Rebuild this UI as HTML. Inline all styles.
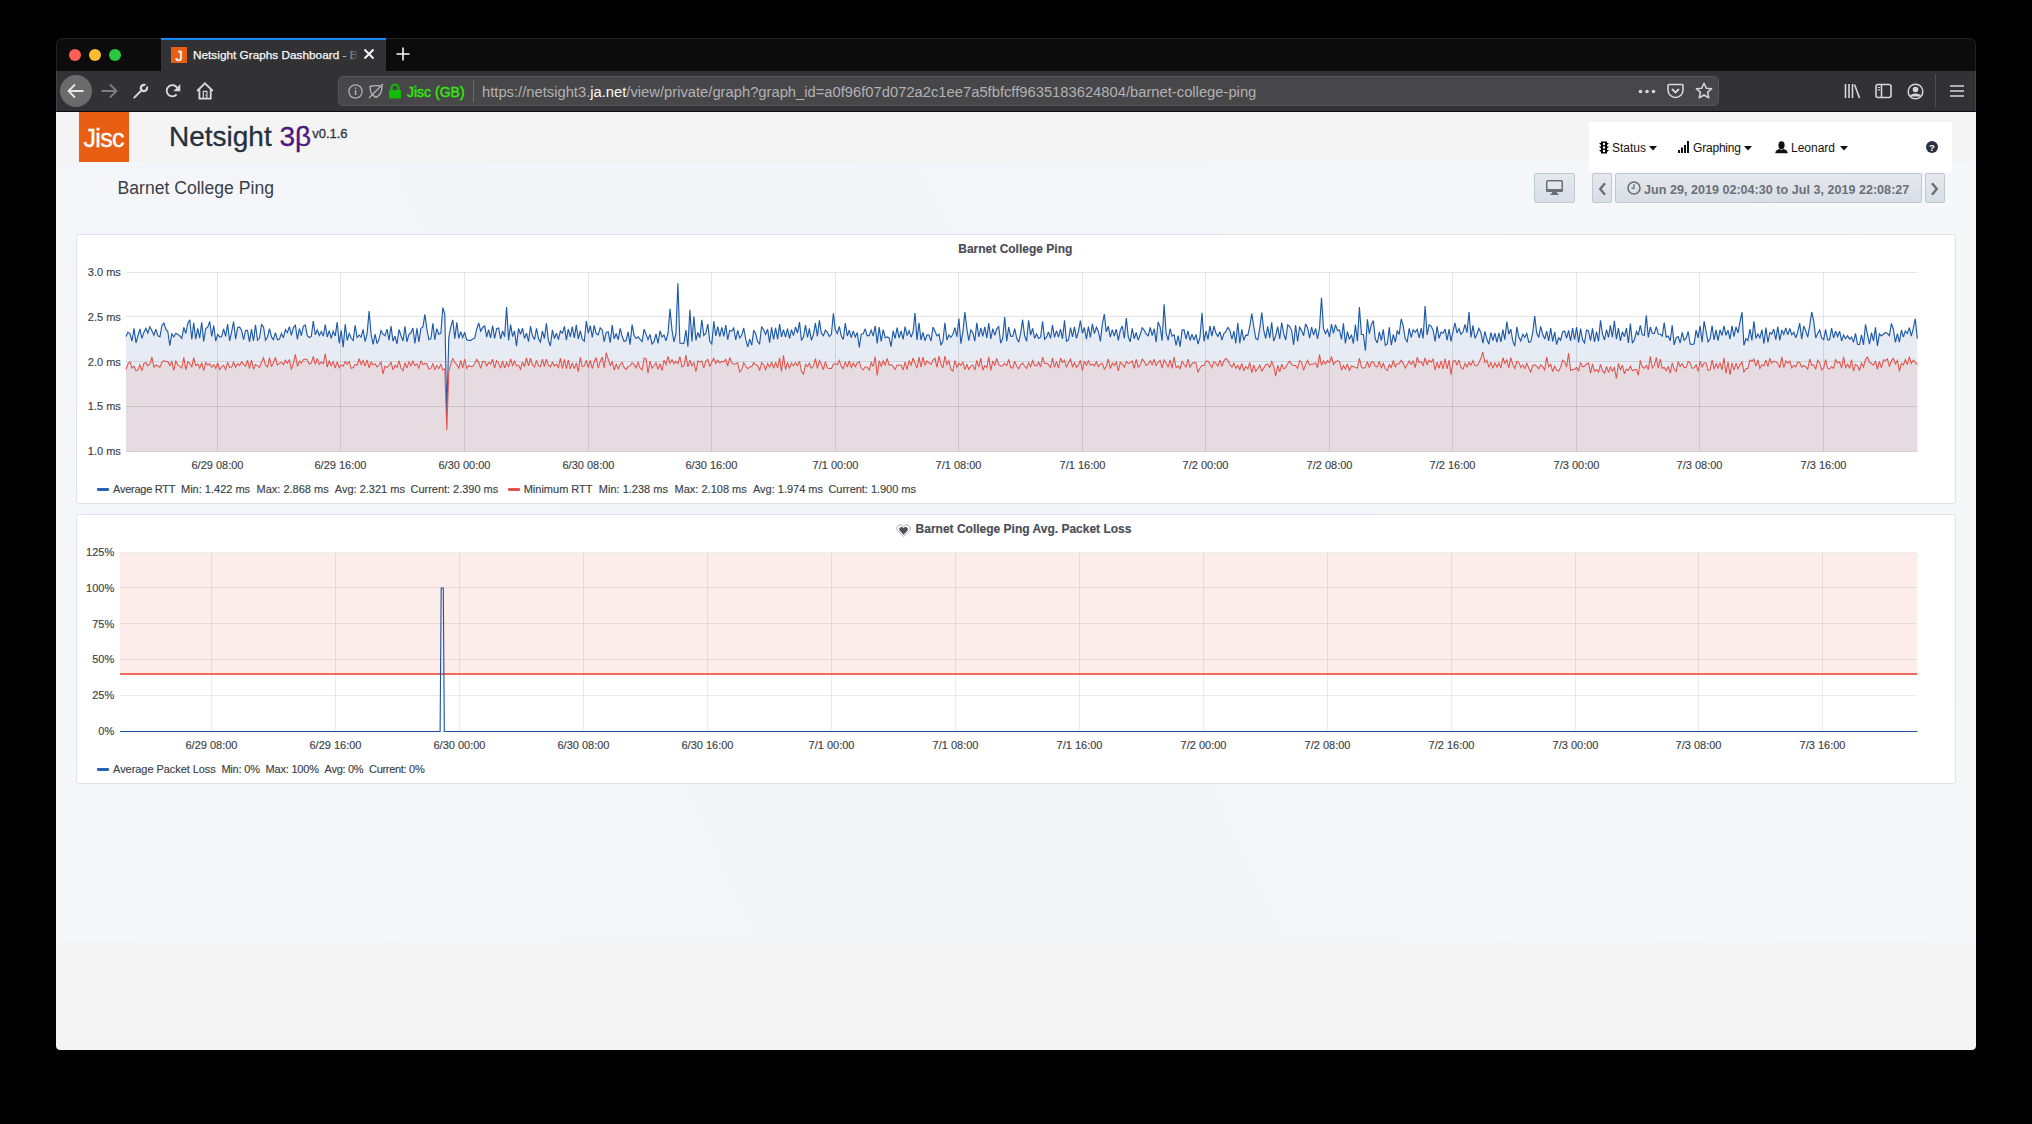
<!DOCTYPE html>
<html><head><meta charset="utf-8">
<style>
*{box-sizing:border-box;margin:0;padding:0}
html,body{width:2032px;height:1124px;background:#000;overflow:hidden;font-family:"Liberation Sans",sans-serif}
.abs{position:absolute}
#win{position:absolute;left:56px;top:38px;width:1920px;height:1012px;border-radius:6px 6px 4px 4px;overflow:hidden;background:transparent}
#winborder{position:absolute;left:56px;top:38px;width:1920px;height:1012px;border-radius:6px 6px 4px 4px;border:1px solid rgba(255,255,255,0.09);pointer-events:none}
#tabbar{position:absolute;left:0;top:0;width:1920px;height:33px;background:#0c0c0d}
#toolbar{position:absolute;left:0;top:33px;width:1920px;height:41px;background:#323234;border-bottom:1px solid #0c0c0d}
.dot{position:absolute;width:12px;height:12px;border-radius:50%}
.txt{position:absolute;white-space:pre;line-height:1}
#page{position:absolute;left:0;top:74px;width:1920px;height:938px;background:#f4f4f4;border-radius:0 0 4px 4px;overflow:hidden}
#grad{position:absolute;left:0;top:50px;width:1920px;height:781px;background:linear-gradient(65deg,#f5f6f9 0%,#f4f5f8 45%,#f6f7f8 100%)}
.panel{position:absolute;left:20px;width:1880px;height:270px;background:#fff;border:1px solid #dde3ec;border-radius:3px}
.btn{position:absolute;top:61px;height:30px;border:1px solid #c2c8d0;border-radius:2px;background:linear-gradient(#e5e9ee,#d8dee6)}
.ax{position:absolute;white-space:pre;line-height:1;font-size:11px;color:#3a3a3a;-webkit-text-stroke:0.15px currentColor}
</style></head>
<body>
<div id="win">
  <div id="tabbar" style="border-radius:6px 6px 0 0">
    <div class="dot" style="left:13px;top:11px;background:#fe5f57"></div>
    <div class="dot" style="left:33px;top:11px;background:#febc2e"></div>
    <div class="dot" style="left:53px;top:11px;background:#28c840"></div>
    <div class="abs" style="left:105px;top:0;width:225px;height:33px;background:#323234;border-top:2px solid #0a84ff"></div>
    <div class="abs" style="left:115px;top:9px;width:16px;height:16px;background:#e85e13"></div>
    <div class="txt" style="left:119.5px;top:10.5px;font-size:14.5px;color:#fff;-webkit-text-stroke:0.3px #fff">J</div>
    <div class="txt" style="left:137px;top:12px;font-size:11.8px;color:#f9f9fa;-webkit-text-stroke:0.25px #f9f9fa">Netsight Graphs Dashboard - B</div>
    <div class="abs" style="left:283px;top:8px;width:20px;height:18px;background:linear-gradient(90deg,rgba(50,50,52,0.1),rgba(50,50,52,0.6) 60%,#323234 100%)"></div>
    <svg class="abs" style="left:307px;top:10px" width="12" height="12" viewBox="0 0 12 12"><path d="M1.5 1.5L10.5 10.5M10.5 1.5L1.5 10.5" stroke="#f9f9fa" stroke-width="1.9"/></svg>
    <svg class="abs" style="left:340px;top:9px" width="14" height="14" viewBox="0 0 14 14"><path d="M7 0.5V13.5M0.5 7H13.5" stroke="#f9f9fa" stroke-width="1.6"/></svg>
  </div>
  <div id="toolbar">
    <div class="abs" style="left:4px;top:4px;width:32px;height:32px;border-radius:50%;background:#6b6b6b"></div>
    <svg class="abs" style="left:11px;top:12px" width="18" height="16" viewBox="0 0 18 16"><path d="M16.5 8H1.8M8 1.5L1.5 8L8 14.5" stroke="#e6e6e6" stroke-width="1.8" fill="none"/></svg>
    <svg class="abs" style="left:44px;top:12px" width="18" height="16" viewBox="0 0 18 16"><path d="M1.5 8H16.2M10 1.5L16.5 8L10 14.5" stroke="#7e7e80" stroke-width="1.8" fill="none"/></svg>
    <svg class="abs" style="left:77px;top:12px" width="17" height="16" viewBox="0 0 17 16"><path d="M1.3 14.6L8.6 7.3" stroke="#d7d7db" stroke-width="2" stroke-linecap="round"/><circle cx="10.9" cy="5.1" r="3.1" fill="none" stroke="#d7d7db" stroke-width="2.3"/><path d="M11 5L15.5 0.5" stroke="#323234" stroke-width="2"/></svg>
    <svg class="abs" style="left:109px;top:12px" width="17" height="16" viewBox="0 0 17 16"><path d="M11.6 11.4A5.6 5.6 0 1 1 12.2 5" fill="none" stroke="#d7d7db" stroke-width="1.9"/><path d="M15.3 1.1V8.2H8.4Z" fill="#d7d7db"/></svg>
    <svg class="abs" style="left:140px;top:11px" width="18" height="18" viewBox="0 0 18 18"><path d="M1.1 9L8.9 1.3L16.8 9" fill="none" stroke="#d7d7db" stroke-width="1.9"/><path d="M3.4 7.5V16.6H14.7V7.5" fill="none" stroke="#d7d7db" stroke-width="1.9"/><rect x="7.3" y="9.4" width="3.6" height="7" fill="none" stroke="#d7d7db" stroke-width="1.2"/><circle cx="9.8" cy="13.2" r="0.6" fill="#d7d7db"/></svg>
    <div class="abs" style="left:282px;top:5px;width:1381px;height:30px;border-radius:5px;background:#474749;border:1px solid #555557"></div>
    <svg class="abs" style="left:292px;top:13px" width="15" height="15" viewBox="0 0 15 15"><circle cx="7.5" cy="7.5" r="6.6" fill="none" stroke="#b1b1b3" stroke-width="1.3"/><rect x="6.8" y="6" width="1.5" height="5" fill="#b1b1b3"/><rect x="6.8" y="3.4" width="1.5" height="1.5" fill="#b1b1b3"/></svg>
    <svg class="abs" style="left:312px;top:12px" width="16" height="16" viewBox="0 0 16 16"><path d="M2 3.5C5 2.5 11 2.5 14 3.5C14 9 11 13 8 14.5C5 13 2 9 2 3.5Z" fill="none" stroke="#b1b1b3" stroke-width="1.4"/><path d="M1 15L15 1" stroke="#b1b1b3" stroke-width="1.4"/></svg>
    <svg class="abs" style="left:332px;top:12px" width="14" height="16" viewBox="0 0 14 16"><path d="M3.5 7V5A3.5 3.5 0 0 1 10.5 5V7" fill="none" stroke="#12bc00" stroke-width="2"/><rect x="1" y="7" width="12" height="8.5" rx="1" fill="#12bc00"/></svg>
    <div class="txt" style="left:351px;top:14px;font-size:14px;color:#30e60b;-webkit-text-stroke:0.45px #30e60b">Jisc (GB)</div>
    <div class="abs" style="left:417px;top:9px;width:1px;height:22px;background:#2f9a1c"></div>
    <div class="txt" style="left:426px;top:14px;font-size:14.75px;color:#b1b1b3">https://netsight3.<span style="color:#f9f9fa">ja.net</span>/view/private/graph?graph_id=a0f96f07d072a2c1ee7a5fbfcff9635183624804/barnet-college-ping</div>
    <svg class="abs" style="left:1582px;top:18px" width="18" height="5" viewBox="0 0 18 5"><circle cx="2.5" cy="2.5" r="1.8" fill="#d7d7db"/><circle cx="9" cy="2.5" r="1.8" fill="#d7d7db"/><circle cx="15.5" cy="2.5" r="1.8" fill="#d7d7db"/></svg>
    <svg class="abs" style="left:1611px;top:12px" width="17" height="16" viewBox="0 0 17 16"><path d="M2 1.5H15A1 1 0 0 1 16 2.5V7A7.5 7.5 0 0 1 1 7V2.5A1 1 0 0 1 2 1.5Z" fill="none" stroke="#d7d7db" stroke-width="1.6"/><path d="M5 6L8.5 9.5L12 6" fill="none" stroke="#d7d7db" stroke-width="1.8"/></svg>
    <svg class="abs" style="left:1639px;top:11px" width="18" height="18" viewBox="0 0 18 18"><path d="M9 1.3L11.3 6.3L16.6 6.8L12.6 10.4L13.8 15.8L9 13L4.2 15.8L5.4 10.4L1.4 6.8L6.7 6.3Z" fill="none" stroke="#d7d7db" stroke-width="1.5" stroke-linejoin="round"/></svg>
    <svg class="abs" style="left:1788px;top:12px" width="17" height="16" viewBox="0 0 17 16"><path d="M1.5 1V15M5 1V15M8.5 1V15M10.5 1.5L15.5 15" stroke="#d7d7db" stroke-width="1.6" fill="none"/></svg>
    <svg class="abs" style="left:1819px;top:12px" width="17" height="16" viewBox="0 0 17 16"><rect x="1" y="1.5" width="15" height="13" rx="2" fill="none" stroke="#d7d7db" stroke-width="1.6"/><path d="M6.5 2V14" stroke="#d7d7db" stroke-width="1.6"/><path d="M2.8 4.5H5M2.8 6.8H5" stroke="#d7d7db" stroke-width="1.2"/></svg>
    <svg class="abs" style="left:1851px;top:12px" width="17" height="17" viewBox="0 0 17 17"><circle cx="8.5" cy="8.5" r="7.3" fill="none" stroke="#d7d7db" stroke-width="1.5"/><circle cx="8.5" cy="6.5" r="2.8" fill="#d7d7db"/><path d="M3.5 13.5C5 10.5 12 10.5 13.5 13.5" fill="#d7d7db" stroke="#d7d7db" stroke-width="1.5"/></svg>
    <div class="abs" style="left:1879px;top:3px;width:1px;height:33px;background:#505052"></div>
    <svg class="abs" style="left:1894px;top:13px" width="14" height="14" viewBox="0 0 14 14"><path d="M0 2H14M0 7H14M0 12H14" stroke="#d7d7db" stroke-width="1.6"/></svg>
  </div>
  <div id="page">
    <div id="grad"></div>
    <div class="abs" style="left:23px;top:0;width:50px;height:50px;background:#e85e13"></div>
    <div class="txt" style="left:27.5px;top:14px;font-size:25px;color:#fff;letter-spacing:-0.7px;-webkit-text-stroke:0.35px #fff">Jisc</div>
    <div class="txt" style="left:113px;top:11px;font-size:28px;color:#24313d;-webkit-text-stroke:0.3px #24313d">Netsight <span style="color:#5b0f8f">3β</span><span style="font-size:13px;color:#333;vertical-align:top;position:relative;top:4px;margin-left:1px">v0.1.6</span></div>
    <div class="abs" style="left:1533px;top:10px;width:363px;height:50px;background:#fff"></div>
    <svg class="abs" style="left:1543px;top:29px" width="10" height="13" viewBox="0 0 10 13"><path d="M2 0.5H8V12.5H2Z" fill="#000"/><path d="M0 2H2L2 4ZM10 2H8L8 4ZM0 5.5H2L2 7.5ZM10 5.5H8L8 7.5ZM0 9H2L2 11ZM10 9H8L8 11Z" fill="#000"/><circle cx="5" cy="3" r="1.2" fill="#fff"/><circle cx="5" cy="6.5" r="1.2" fill="#fff"/><circle cx="5" cy="10" r="1.2" fill="#fff"/></svg>
    <div class="txt" style="left:1556px;top:30px;font-size:12px;color:#111">Status</div>
    <svg class="abs" style="left:1593px;top:34px" width="8" height="5" viewBox="0 0 8 5"><path d="M0 0H8L4 4.5Z" fill="#111"/></svg>
    <svg class="abs" style="left:1622px;top:29px" width="12" height="12" viewBox="0 0 12 12"><rect x="0" y="9" width="2" height="3" fill="#111"/><rect x="3" y="6.5" width="2" height="5.5" fill="#111"/><rect x="6" y="4" width="2" height="8" fill="#111"/><rect x="9" y="0" width="2" height="12" fill="#111"/></svg>
    <div class="txt" style="left:1637px;top:30px;font-size:12px;color:#111;letter-spacing:-0.2px">Graphing</div>
    <svg class="abs" style="left:1688px;top:34px" width="8" height="5" viewBox="0 0 8 5"><path d="M0 0H8L4 4.5Z" fill="#111"/></svg>
    <svg class="abs" style="left:1719px;top:29px" width="13" height="13" viewBox="0 0 13 13"><ellipse cx="6.5" cy="4.2" rx="3.1" ry="4" fill="#111"/><path d="M0.2 12.2C0.5 9.5 2.5 8.6 4.5 8L6.5 9L8.5 8C10.5 8.6 12.5 9.5 12.8 12.2Z" fill="#111"/></svg>
    <div class="txt" style="left:1735px;top:30px;font-size:12px;color:#111">Leonard</div>
    <svg class="abs" style="left:1784px;top:34px" width="8" height="5" viewBox="0 0 8 5"><path d="M0 0H8L4 4.5Z" fill="#111"/></svg>
    <svg class="abs" style="left:1870px;top:29px" width="12" height="12" viewBox="0 0 12 12"><circle cx="6" cy="6" r="6" fill="#2a3140"/><text x="6" y="9.5" font-size="9.5" font-weight="bold" text-anchor="middle" fill="#fff" font-family="Liberation Sans">?</text></svg>
    <div class="txt" style="left:61.5px;top:68.2px;font-size:17.6px;color:#3a3f47">Barnet College Ping</div>
    <div class="btn" style="left:1478px;width:41px"></div>
    <svg class="abs" style="left:1490px;top:68px" width="17" height="15" viewBox="0 0 17 15"><rect x="0" y="0" width="17" height="12" rx="1.5" fill="#6c6f75"/><rect x="1.5" y="1.5" width="14" height="7.5" fill="#e4e7eb"/><rect x="6" y="12" width="5" height="2" fill="#6c6f75"/><rect x="4.5" y="13.5" width="8" height="1.5" fill="#6c6f75"/></svg>
    <div class="btn" style="left:1536px;width:20px"></div>
    <svg class="abs" style="left:1542px;top:70px" width="9" height="14" viewBox="0 0 9 14"><path d="M7 1.2L2.2 7L7 12.8" fill="none" stroke="#6c6f75" stroke-width="2.4"/></svg>
    <div class="btn" style="left:1559px;width:307px"></div>
    <svg class="abs" style="left:1571px;top:69px" width="14" height="14" viewBox="0 0 14 14"><circle cx="7" cy="7" r="6" fill="none" stroke="#6c6f75" stroke-width="1.6"/><path d="M7 3.3V7.3H4.5" fill="none" stroke="#6c6f75" stroke-width="1.3"/></svg>
    <div class="txt" style="left:1588px;top:71.5px;font-size:12.6px;font-weight:bold;color:#6c6f75">Jun 29, 2019 02:04:30 to Jul 3, 2019 22:08:27</div>
    <div class="btn" style="left:1869px;width:20px"></div>
    <svg class="abs" style="left:1874px;top:70px" width="9" height="14" viewBox="0 0 9 14"><path d="M2 1.2L6.8 7L2 12.8" fill="none" stroke="#6c6f75" stroke-width="2.4"/></svg>

    <!-- PANEL 1 -->
    <div class="panel" style="top:122px"></div>
    <!-- PANEL 2 -->
    <div class="panel" style="top:402px"></div>
    <svg class="abs" style="left:0;top:0" width="1920" height="938" viewBox="56 112 1920 938">
<path d="M126.0 336.5 L128.0 332.1 L130.0 333.8 L132.0 341.0 L134.0 328.3 L136.0 342.9 L138.0 335.5 L139.9 328.9 L141.9 338.4 L143.9 332.4 L145.9 328.4 L147.9 333.0 L149.9 326.7 L151.9 330.7 L153.9 335.2 L155.9 329.2 L157.9 335.8 L159.9 336.8 L161.9 325.5 L163.9 323.1 L165.9 329.4 L167.8 331.5 L169.8 345.7 L171.8 333.8 L173.8 336.9 L175.8 333.2 L177.8 334.4 L179.8 336.0 L181.8 338.4 L183.8 327.4 L185.8 333.5 L187.8 323.4 L189.8 319.8 L191.8 339.4 L193.7 322.7 L195.7 339.1 L197.7 328.3 L199.7 338.1 L201.7 322.2 L203.7 341.4 L205.7 328.5 L207.7 327.1 L209.7 321.4 L211.7 336.3 L213.7 325.5 L215.7 341.1 L217.7 334.3 L219.6 336.9 L221.6 336.8 L223.6 328.9 L225.6 336.4 L227.6 324.0 L229.6 340.8 L231.6 331.9 L233.6 321.6 L235.6 339.2 L237.6 327.7 L239.6 327.0 L241.6 330.4 L243.6 339.7 L245.6 330.5 L247.5 330.3 L249.5 341.8 L251.5 329.1 L253.5 341.0 L255.5 324.7 L257.5 340.2 L259.5 338.1 L261.5 324.5 L263.5 326.7 L265.5 340.2 L267.5 337.0 L269.5 328.7 L271.5 336.9 L273.4 339.6 L275.4 332.7 L277.4 339.7 L279.4 339.2 L281.4 333.5 L283.4 337.8 L285.4 329.7 L287.4 332.6 L289.4 326.7 L291.4 335.3 L293.4 327.3 L295.4 325.3 L297.4 339.3 L299.4 328.3 L301.3 335.7 L303.3 326.4 L305.3 324.9 L307.3 335.7 L309.3 337.5 L311.3 336.4 L313.3 321.0 L315.3 334.9 L317.3 329.8 L319.3 335.5 L321.3 331.6 L323.3 336.1 L325.3 324.5 L327.2 337.0 L329.2 330.6 L331.2 338.3 L333.2 331.3 L335.2 335.9 L337.2 322.2 L339.2 343.3 L341.2 330.4 L343.2 347.3 L345.2 324.3 L347.2 340.4 L349.2 333.5 L351.2 338.0 L353.2 340.6 L355.1 325.3 L357.1 337.5 L359.1 335.1 L361.1 337.2 L363.1 329.4 L365.1 341.7 L367.1 333.6 L369.1 311.0 L371.1 334.5 L373.1 344.4 L375.1 334.1 L377.1 343.6 L379.1 338.9 L381.0 330.5 L383.0 334.1 L385.0 335.8 L387.0 329.2 L389.0 340.2 L391.0 326.1 L393.0 341.2 L395.0 336.2 L397.0 343.8 L399.0 329.5 L401.0 335.7 L403.0 341.0 L405.0 326.3 L406.9 341.9 L408.9 334.6 L410.9 332.8 L412.9 328.0 L414.9 343.5 L416.9 328.3 L418.9 342.0 L420.9 328.3 L422.9 326.9 L424.9 314.3 L426.9 329.3 L428.9 339.7 L430.9 338.7 L432.9 323.3 L434.8 339.8 L436.8 328.6 L438.8 334.2 L440.8 333.4 L442.8 307.7 L444.8 314.0 L446.8 413.9 L448.8 337.3 L450.8 326.9 L452.8 319.8 L454.8 338.8 L456.8 322.2 L458.8 338.4 L460.7 331.8 L462.7 337.6 L464.7 332.3 L466.7 339.8 L468.7 340.4 L470.7 340.4 L472.7 339.0 L474.7 338.2 L476.7 328.9 L478.7 323.0 L480.7 331.2 L482.7 327.5 L484.7 325.9 L486.7 337.2 L488.6 329.7 L490.6 337.8 L492.6 325.5 L494.6 338.3 L496.6 328.6 L498.6 327.9 L500.6 339.0 L502.6 330.9 L504.6 336.8 L506.6 307.0 L508.6 340.5 L510.6 324.6 L512.6 336.6 L514.5 330.8 L516.5 346.1 L518.5 328.4 L520.5 334.3 L522.5 328.2 L524.5 338.5 L526.5 333.2 L528.5 341.7 L530.5 326.2 L532.5 335.8 L534.5 339.6 L536.5 328.3 L538.5 338.6 L540.4 342.0 L542.4 331.0 L544.4 338.5 L546.4 323.2 L548.4 340.4 L550.4 346.0 L552.4 329.8 L554.4 338.5 L556.4 333.2 L558.4 339.6 L560.4 331.0 L562.4 333.1 L564.4 326.3 L566.4 340.2 L568.3 329.2 L570.3 336.9 L572.3 326.6 L574.3 337.9 L576.3 324.9 L578.3 339.0 L580.3 330.6 L582.3 339.3 L584.3 341.2 L586.3 321.1 L588.3 333.2 L590.3 325.6 L592.3 337.5 L594.2 325.3 L596.2 333.6 L598.2 334.9 L600.2 327.8 L602.2 329.9 L604.2 341.6 L606.2 332.4 L608.2 331.8 L610.2 342.6 L612.2 325.0 L614.2 338.8 L616.2 333.5 L618.2 339.7 L620.2 328.3 L622.1 336.0 L624.1 341.5 L626.1 340.5 L628.1 331.9 L630.1 344.6 L632.1 324.6 L634.1 335.4 L636.1 338.5 L638.1 336.8 L640.1 339.5 L642.1 341.6 L644.1 329.2 L646.1 334.4 L648.0 339.6 L650.0 334.4 L652.0 344.0 L654.0 341.7 L656.0 333.8 L658.0 343.4 L660.0 330.9 L662.0 336.9 L664.0 335.0 L666.0 340.9 L668.0 333.1 L670.0 308.8 L672.0 330.1 L674.0 341.9 L675.9 333.7 L677.9 283.3 L679.9 343.0 L681.9 343.3 L683.9 343.2 L685.9 330.1 L687.9 346.6 L689.9 309.9 L691.9 341.5 L693.9 316.5 L695.9 340.3 L697.9 332.5 L699.9 337.7 L701.8 319.7 L703.8 335.4 L705.8 333.3 L707.8 324.1 L709.8 341.3 L711.8 343.9 L713.8 321.4 L715.8 336.0 L717.8 326.7 L719.8 336.6 L721.8 327.3 L723.8 336.4 L725.8 325.0 L727.7 339.6 L729.7 330.5 L731.7 331.0 L733.7 328.0 L735.7 339.8 L737.7 330.3 L739.7 337.9 L741.7 335.3 L743.7 328.0 L745.7 339.2 L747.7 346.8 L749.7 339.1 L751.7 345.1 L753.7 330.3 L755.6 333.5 L757.6 341.6 L759.6 343.9 L761.6 326.5 L763.6 329.8 L765.6 334.5 L767.6 329.1 L769.6 342.6 L771.6 327.3 L773.6 339.4 L775.6 327.8 L777.6 339.1 L779.6 324.1 L781.5 336.9 L783.5 329.6 L785.5 337.1 L787.5 328.7 L789.5 338.5 L791.5 329.7 L793.5 335.6 L795.5 326.8 L797.5 333.2 L799.5 322.1 L801.5 340.6 L803.5 336.8 L805.5 325.2 L807.5 337.5 L809.4 328.4 L811.4 340.4 L813.4 334.5 L815.4 323.2 L817.4 336.3 L819.4 320.3 L821.4 333.4 L823.4 335.6 L825.4 330.2 L827.4 332.4 L829.4 336.5 L831.4 334.3 L833.4 313.2 L835.3 329.7 L837.3 333.4 L839.3 326.4 L841.3 336.0 L843.3 339.5 L845.3 323.1 L847.3 336.0 L849.3 330.2 L851.3 337.6 L853.3 330.9 L855.3 336.9 L857.3 332.6 L859.3 347.5 L861.2 334.2 L863.2 333.7 L865.2 328.8 L867.2 335.9 L869.2 335.4 L871.2 330.1 L873.2 336.1 L875.2 325.8 L877.2 343.4 L879.2 327.1 L881.2 341.5 L883.2 329.7 L885.2 337.7 L887.2 336.9 L889.1 337.8 L891.1 346.6 L893.1 330.7 L895.1 338.5 L897.1 327.7 L899.1 337.8 L901.1 330.8 L903.1 339.4 L905.1 326.7 L907.1 335.6 L909.1 330.7 L911.1 337.2 L913.1 331.8 L915.0 313.0 L917.0 339.9 L919.0 322.9 L921.0 340.0 L923.0 332.3 L925.0 340.7 L927.0 334.8 L929.0 335.1 L931.0 341.1 L933.0 327.2 L935.0 331.3 L937.0 335.9 L939.0 334.2 L941.0 345.3 L942.9 341.0 L944.9 322.7 L946.9 340.0 L948.9 335.0 L950.9 337.3 L952.9 334.2 L954.9 327.6 L956.9 336.8 L958.9 318.6 L960.9 343.7 L962.9 331.7 L964.9 312.0 L966.9 329.1 L968.8 340.6 L970.8 329.9 L972.8 332.8 L974.8 341.1 L976.8 322.8 L978.8 337.0 L980.8 328.0 L982.8 336.4 L984.8 326.8 L986.8 337.9 L988.8 323.2 L990.8 339.0 L992.8 328.7 L994.8 335.4 L996.7 328.8 L998.7 326.6 L1000.7 343.1 L1002.7 338.3 L1004.7 317.1 L1006.7 341.2 L1008.7 327.2 L1010.7 336.1 L1012.7 336.3 L1014.7 328.7 L1016.7 338.0 L1018.7 342.2 L1020.7 332.9 L1022.6 319.7 L1024.6 335.6 L1026.6 341.2 L1028.6 320.3 L1030.6 335.1 L1032.6 328.4 L1034.6 338.3 L1036.6 333.9 L1038.6 338.5 L1040.6 337.1 L1042.6 321.3 L1044.6 339.3 L1046.6 336.9 L1048.5 331.8 L1050.5 338.4 L1052.5 325.2 L1054.5 337.4 L1056.5 330.7 L1058.5 337.1 L1060.5 329.2 L1062.5 338.8 L1064.5 320.4 L1066.5 341.2 L1068.5 339.8 L1070.5 327.7 L1072.5 336.9 L1074.5 326.9 L1076.4 338.3 L1078.4 331.6 L1080.4 320.7 L1082.4 333.2 L1084.4 327.5 L1086.4 339.1 L1088.4 326.6 L1090.4 337.5 L1092.4 323.8 L1094.4 333.6 L1096.4 327.2 L1098.4 331.7 L1100.4 341.4 L1102.3 324.4 L1104.3 314.0 L1106.3 331.9 L1108.3 326.1 L1110.3 337.1 L1112.3 329.6 L1114.3 336.0 L1116.3 329.2 L1118.3 340.3 L1120.3 330.3 L1122.3 326.0 L1124.3 338.5 L1126.3 318.0 L1128.3 336.9 L1130.2 341.8 L1132.2 328.3 L1134.2 338.7 L1136.2 332.5 L1138.2 340.1 L1140.2 334.7 L1142.2 327.7 L1144.2 330.4 L1146.2 333.8 L1148.2 335.8 L1150.2 327.4 L1152.2 335.5 L1154.2 328.7 L1156.1 342.1 L1158.1 322.0 L1160.1 326.8 L1162.1 340.6 L1164.1 304.4 L1166.1 333.0 L1168.1 340.3 L1170.1 328.7 L1172.1 336.1 L1174.1 334.7 L1176.1 345.4 L1178.1 335.6 L1180.1 346.6 L1182.1 330.0 L1184.0 329.6 L1186.0 339.0 L1188.0 330.9 L1190.0 340.5 L1192.0 334.3 L1194.0 340.1 L1196.0 334.4 L1198.0 344.1 L1200.0 337.0 L1202.0 312.8 L1204.0 341.3 L1206.0 331.1 L1208.0 339.5 L1209.9 325.8 L1211.9 336.1 L1213.9 326.1 L1215.9 333.0 L1217.9 336.4 L1219.9 331.7 L1221.9 340.1 L1223.9 333.5 L1225.9 331.5 L1227.9 327.4 L1229.9 330.4 L1231.9 339.2 L1233.9 331.1 L1235.8 343.3 L1237.8 322.7 L1239.8 343.1 L1241.8 329.4 L1243.8 340.4 L1245.8 335.1 L1247.8 335.4 L1249.8 326.0 L1251.8 313.5 L1253.8 327.0 L1255.8 338.4 L1257.8 339.7 L1259.8 327.8 L1261.8 312.5 L1263.7 329.9 L1265.7 338.5 L1267.7 326.3 L1269.7 338.0 L1271.7 322.3 L1273.7 341.2 L1275.7 335.5 L1277.7 326.7 L1279.7 339.0 L1281.7 322.5 L1283.7 333.7 L1285.7 340.0 L1287.7 324.9 L1289.6 326.3 L1291.6 330.3 L1293.6 344.8 L1295.6 325.0 L1297.6 341.4 L1299.6 327.3 L1301.6 330.6 L1303.6 335.7 L1305.6 323.8 L1307.6 328.0 L1309.6 338.1 L1311.6 327.1 L1313.6 335.1 L1315.6 328.3 L1317.5 339.0 L1319.5 328.0 L1321.5 297.7 L1323.5 328.4 L1325.5 333.5 L1327.5 329.6 L1329.5 337.2 L1331.5 324.1 L1333.5 333.4 L1335.5 324.7 L1337.5 330.5 L1339.5 330.0 L1341.5 339.4 L1343.4 323.3 L1345.4 343.5 L1347.4 331.5 L1349.4 339.4 L1351.4 334.6 L1353.4 343.5 L1355.4 324.9 L1357.4 341.1 L1359.4 307.0 L1361.4 334.4 L1363.4 334.5 L1365.4 350.8 L1367.4 319.3 L1369.3 333.6 L1371.3 324.6 L1373.3 320.6 L1375.3 339.1 L1377.3 343.0 L1379.3 331.8 L1381.3 340.3 L1383.3 329.3 L1385.3 345.4 L1387.3 343.8 L1389.3 327.2 L1391.3 345.2 L1393.3 334.3 L1395.3 342.1 L1397.2 330.6 L1399.2 334.5 L1401.2 318.8 L1403.2 325.8 L1405.2 338.5 L1407.2 341.7 L1409.2 328.4 L1411.2 337.5 L1413.2 329.7 L1415.2 332.3 L1417.2 329.4 L1419.2 337.9 L1421.2 328.1 L1423.1 338.4 L1425.1 306.0 L1427.1 334.9 L1429.1 324.9 L1431.1 326.1 L1433.1 329.9 L1435.1 341.3 L1437.1 326.3 L1439.1 338.3 L1441.1 332.1 L1443.1 333.3 L1445.1 329.1 L1447.1 340.1 L1449.1 329.0 L1451.0 341.3 L1453.0 331.0 L1455.0 322.8 L1457.0 332.9 L1459.0 328.6 L1461.0 334.3 L1463.0 331.8 L1465.0 324.5 L1467.0 332.6 L1469.0 312.0 L1471.0 337.4 L1473.0 325.3 L1475.0 338.4 L1476.9 334.2 L1478.9 328.5 L1480.9 332.5 L1482.9 343.2 L1484.9 331.5 L1486.9 339.3 L1488.9 344.2 L1490.9 332.5 L1492.9 340.7 L1494.9 333.0 L1496.9 342.3 L1498.9 332.9 L1500.9 341.9 L1502.9 329.5 L1504.8 339.6 L1506.8 321.7 L1508.8 334.1 L1510.8 329.2 L1512.8 341.2 L1514.8 346.1 L1516.8 326.9 L1518.8 337.0 L1520.8 341.0 L1522.8 334.3 L1524.8 337.3 L1526.8 333.5 L1528.8 342.2 L1530.7 341.8 L1532.7 332.9 L1534.7 316.0 L1536.7 333.0 L1538.7 337.5 L1540.7 326.3 L1542.7 334.3 L1544.7 339.0 L1546.7 331.2 L1548.7 340.8 L1550.7 328.1 L1552.7 341.5 L1554.7 331.9 L1556.6 344.7 L1558.6 337.8 L1560.6 340.2 L1562.6 332.0 L1564.6 331.1 L1566.6 338.2 L1568.6 330.4 L1570.6 340.8 L1572.6 328.2 L1574.6 339.6 L1576.6 327.0 L1578.6 342.6 L1580.6 328.7 L1582.6 339.7 L1584.5 342.8 L1586.5 330.0 L1588.5 330.9 L1590.5 340.7 L1592.5 328.3 L1594.5 342.0 L1596.5 331.6 L1598.5 341.3 L1600.5 320.4 L1602.5 334.0 L1604.5 340.0 L1606.5 329.7 L1608.5 337.3 L1610.4 325.3 L1612.4 337.1 L1614.4 320.7 L1616.4 339.2 L1618.4 328.1 L1620.4 340.8 L1622.4 331.7 L1624.4 336.7 L1626.4 328.2 L1628.4 343.0 L1630.4 323.6 L1632.4 343.1 L1634.4 339.7 L1636.4 331.5 L1638.3 335.3 L1640.3 325.3 L1642.3 334.9 L1644.3 335.4 L1646.3 315.4 L1648.3 337.4 L1650.3 327.0 L1652.3 333.4 L1654.3 333.5 L1656.3 326.7 L1658.3 334.0 L1660.3 334.3 L1662.3 336.1 L1664.2 322.7 L1666.2 337.1 L1668.2 336.1 L1670.2 340.7 L1672.2 325.2 L1674.2 344.9 L1676.2 337.7 L1678.2 336.5 L1680.2 343.0 L1682.2 332.3 L1684.2 340.2 L1686.2 338.0 L1688.2 331.5 L1690.1 343.9 L1692.1 344.6 L1694.1 343.8 L1696.1 330.1 L1698.1 337.9 L1700.1 325.8 L1702.1 342.3 L1704.1 321.2 L1706.1 331.8 L1708.1 341.7 L1710.1 338.7 L1712.1 325.6 L1714.1 340.0 L1716.1 329.9 L1718.0 340.7 L1720.0 329.8 L1722.0 335.5 L1724.0 325.8 L1726.0 335.3 L1728.0 330.2 L1730.0 339.1 L1732.0 325.9 L1734.0 336.6 L1736.0 326.9 L1738.0 332.8 L1740.0 321.7 L1742.0 312.0 L1743.9 345.3 L1745.9 338.6 L1747.9 340.5 L1749.9 329.1 L1751.9 340.4 L1753.9 321.4 L1755.9 338.4 L1757.9 334.0 L1759.9 337.8 L1761.9 329.6 L1763.9 343.7 L1765.9 327.6 L1767.9 342.4 L1769.9 332.5 L1771.8 334.0 L1773.8 329.0 L1775.8 339.7 L1777.8 326.7 L1779.8 340.3 L1781.8 329.9 L1783.8 334.4 L1785.8 327.8 L1787.8 334.8 L1789.8 328.5 L1791.8 334.8 L1793.8 332.2 L1795.8 337.8 L1797.7 332.2 L1799.7 323.1 L1801.7 339.1 L1803.7 326.0 L1805.7 330.7 L1807.7 337.1 L1809.7 325.7 L1811.7 312.0 L1813.7 320.6 L1815.7 337.9 L1817.7 333.5 L1819.7 330.0 L1821.7 338.0 L1823.7 339.7 L1825.6 329.4 L1827.6 339.8 L1829.6 339.7 L1831.6 328.0 L1833.6 338.0 L1835.6 331.2 L1837.6 336.5 L1839.6 331.1 L1841.6 341.0 L1843.6 334.9 L1845.6 338.7 L1847.6 335.7 L1849.6 339.2 L1851.5 337.0 L1853.5 342.4 L1855.5 333.4 L1857.5 344.2 L1859.5 344.5 L1861.5 334.8 L1863.5 344.8 L1865.5 324.3 L1867.5 334.6 L1869.5 344.1 L1871.5 332.7 L1873.5 340.9 L1875.5 327.3 L1877.4 345.9 L1879.4 333.8 L1881.4 335.9 L1883.4 334.0 L1885.4 332.4 L1887.4 333.4 L1889.4 335.7 L1891.4 323.4 L1893.4 329.3 L1895.4 342.4 L1897.4 333.7 L1899.4 342.2 L1901.4 330.0 L1903.4 337.2 L1905.3 330.9 L1907.3 333.6 L1909.3 327.6 L1911.3 336.1 L1913.3 328.2 L1915.3 318.7 L1917.3 338.6 L1917.3 451.5 L126.0 451.5 Z" fill="#e6ebf4"/>
<path d="M126.0 369.3 L128.0 363.8 L130.0 361.9 L132.0 368.1 L134.0 366.2 L136.0 370.9 L138.0 369.9 L139.9 364.9 L141.9 370.6 L143.9 363.4 L145.9 362.7 L147.9 365.8 L149.9 363.8 L151.9 357.0 L153.9 367.1 L155.9 365.0 L157.9 366.0 L159.9 367.2 L161.9 362.3 L163.9 360.6 L165.9 361.4 L167.8 361.5 L169.8 365.5 L171.8 361.5 L173.8 370.3 L175.8 361.0 L177.8 364.8 L179.8 366.3 L181.8 368.1 L183.8 357.3 L185.8 369.7 L187.8 361.8 L189.8 363.5 L191.8 366.9 L193.7 357.6 L195.7 365.7 L197.7 363.9 L199.7 368.2 L201.7 362.7 L203.7 370.7 L205.7 362.4 L207.7 365.2 L209.7 363.6 L211.7 367.4 L213.7 364.8 L215.7 368.3 L217.7 363.0 L219.6 369.5 L221.6 366.9 L223.6 365.3 L225.6 369.6 L227.6 362.3 L229.6 367.4 L231.6 367.0 L233.6 362.2 L235.6 367.2 L237.6 363.7 L239.6 365.6 L241.6 361.8 L243.6 364.3 L245.6 366.2 L247.5 360.2 L249.5 368.5 L251.5 359.8 L253.5 369.2 L255.5 364.5 L257.5 365.6 L259.5 367.3 L261.5 362.2 L263.5 357.8 L265.5 364.9 L267.5 366.9 L269.5 357.7 L271.5 366.8 L273.4 362.5 L275.4 357.5 L277.4 365.0 L279.4 363.4 L281.4 362.1 L283.4 364.7 L285.4 360.2 L287.4 363.3 L289.4 359.5 L291.4 369.7 L293.4 363.1 L295.4 354.4 L297.4 366.5 L299.4 360.9 L301.3 363.1 L303.3 359.7 L305.3 359.1 L307.3 359.6 L309.3 364.2 L311.3 362.9 L313.3 356.4 L315.3 364.3 L317.3 358.5 L319.3 364.4 L321.3 362.0 L323.3 363.6 L325.3 353.6 L327.2 367.2 L329.2 360.9 L331.2 365.8 L333.2 361.6 L335.2 368.1 L337.2 361.7 L339.2 367.7 L341.2 364.7 L343.2 366.2 L345.2 361.5 L347.2 364.2 L349.2 361.7 L351.2 368.4 L353.2 367.5 L355.1 364.3 L357.1 365.0 L359.1 358.7 L361.1 364.6 L363.1 360.5 L365.1 366.0 L367.1 359.8 L369.1 367.9 L371.1 362.0 L373.1 364.9 L375.1 363.8 L377.1 367.0 L379.1 365.0 L381.0 362.0 L383.0 373.8 L385.0 366.2 L387.0 367.6 L389.0 365.3 L391.0 362.3 L393.0 369.9 L395.0 365.2 L397.0 367.4 L399.0 360.7 L401.0 368.0 L403.0 370.5 L405.0 362.8 L406.9 368.1 L408.9 361.8 L410.9 365.7 L412.9 361.1 L414.9 365.6 L416.9 363.9 L418.9 368.3 L420.9 360.9 L422.9 364.6 L424.9 363.4 L426.9 364.0 L428.9 369.1 L430.9 368.4 L432.9 363.7 L434.8 369.4 L436.8 365.3 L438.8 368.7 L440.8 364.4 L442.8 369.9 L444.8 368.9 L446.8 430.2 L448.8 371.4 L450.8 363.8 L452.8 358.5 L454.8 362.4 L456.8 364.5 L458.8 368.2 L460.7 360.5 L462.7 368.0 L464.7 359.0 L466.7 368.5 L468.7 365.4 L470.7 366.5 L472.7 366.5 L474.7 363.8 L476.7 359.4 L478.7 362.6 L480.7 368.3 L482.7 361.5 L484.7 361.3 L486.7 366.0 L488.6 362.3 L490.6 364.1 L492.6 359.2 L494.6 368.1 L496.6 360.6 L498.6 363.2 L500.6 368.2 L502.6 361.0 L504.6 368.0 L506.6 362.5 L508.6 366.9 L510.6 358.9 L512.6 365.4 L514.5 361.1 L516.5 365.9 L518.5 365.1 L520.5 369.2 L522.5 361.9 L524.5 366.7 L526.5 357.9 L528.5 365.8 L530.5 358.1 L532.5 364.7 L534.5 366.9 L536.5 360.3 L538.5 365.7 L540.4 366.7 L542.4 359.2 L544.4 366.5 L546.4 359.1 L548.4 365.2 L550.4 366.9 L552.4 362.2 L554.4 366.1 L556.4 364.1 L558.4 367.6 L560.4 358.1 L562.4 368.4 L564.4 359.4 L566.4 368.6 L568.3 359.8 L570.3 368.9 L572.3 362.9 L574.3 368.6 L576.3 362.9 L578.3 371.6 L580.3 357.4 L582.3 366.6 L584.3 365.9 L586.3 360.3 L588.3 367.7 L590.3 360.3 L592.3 368.6 L594.2 361.5 L596.2 357.6 L598.2 368.0 L600.2 361.4 L602.2 357.0 L604.2 367.8 L606.2 352.6 L608.2 359.1 L610.2 365.4 L612.2 361.8 L614.2 370.2 L616.2 364.3 L618.2 369.0 L620.2 364.6 L622.1 362.4 L624.1 367.4 L626.1 369.4 L628.1 366.4 L630.1 365.9 L632.1 362.8 L634.1 364.4 L636.1 368.0 L638.1 362.4 L640.1 367.9 L642.1 370.0 L644.1 358.1 L646.1 358.7 L648.0 373.2 L650.0 361.1 L652.0 368.1 L654.0 365.8 L656.0 362.8 L658.0 369.3 L660.0 363.7 L662.0 370.5 L664.0 360.2 L666.0 364.4 L668.0 356.3 L670.0 363.1 L672.0 359.7 L674.0 363.8 L675.9 361.2 L677.9 363.6 L679.9 356.6 L681.9 366.8 L683.9 365.6 L685.9 355.0 L687.9 366.9 L689.9 360.2 L691.9 365.7 L693.9 362.5 L695.9 371.7 L697.9 360.9 L699.9 362.2 L701.8 361.1 L703.8 367.9 L705.8 361.1 L707.8 359.4 L709.8 366.6 L711.8 361.7 L713.8 358.2 L715.8 363.3 L717.8 360.1 L719.8 362.9 L721.8 361.4 L723.8 361.7 L725.8 359.3 L727.7 366.0 L729.7 357.5 L731.7 362.7 L733.7 364.2 L735.7 363.7 L737.7 362.8 L739.7 372.1 L741.7 369.6 L743.7 362.8 L745.7 366.0 L747.7 368.8 L749.7 366.7 L751.7 366.8 L753.7 362.7 L755.6 364.6 L757.6 365.3 L759.6 370.6 L761.6 362.6 L763.6 364.6 L765.6 369.6 L767.6 363.5 L769.6 367.1 L771.6 362.0 L773.6 368.4 L775.6 362.3 L777.6 367.8 L779.6 357.9 L781.5 371.5 L783.5 355.2 L785.5 369.5 L787.5 362.3 L789.5 368.0 L791.5 363.0 L793.5 365.8 L795.5 362.6 L797.5 365.6 L799.5 361.1 L801.5 371.5 L803.5 374.1 L805.5 364.2 L807.5 366.5 L809.4 363.3 L811.4 368.3 L813.4 365.8 L815.4 358.7 L817.4 368.3 L819.4 360.5 L821.4 364.3 L823.4 369.7 L825.4 361.6 L827.4 368.0 L829.4 368.5 L831.4 368.5 L833.4 364.2 L835.3 363.6 L837.3 364.7 L839.3 360.4 L841.3 366.4 L843.3 368.6 L845.3 361.9 L847.3 367.1 L849.3 360.9 L851.3 367.4 L853.3 363.0 L855.3 366.8 L857.3 362.8 L859.3 361.7 L861.2 367.8 L863.2 370.0 L865.2 366.8 L867.2 367.2 L869.2 370.2 L871.2 362.6 L873.2 366.6 L875.2 356.6 L877.2 375.5 L879.2 360.6 L881.2 366.2 L883.2 360.9 L885.2 365.0 L887.2 358.3 L889.1 365.2 L891.1 364.6 L893.1 366.4 L895.1 369.5 L897.1 365.1 L899.1 365.3 L901.1 365.1 L903.1 370.0 L905.1 361.8 L907.1 369.7 L909.1 360.5 L911.1 365.1 L913.1 358.0 L915.0 363.3 L917.0 368.1 L919.0 357.1 L921.0 367.2 L923.0 357.1 L925.0 364.9 L927.0 360.9 L929.0 362.8 L931.0 364.2 L933.0 360.1 L935.0 358.3 L937.0 367.3 L939.0 356.2 L941.0 364.2 L942.9 367.8 L944.9 356.0 L946.9 364.7 L948.9 360.7 L950.9 369.6 L952.9 371.0 L954.9 360.4 L956.9 367.3 L958.9 363.2 L960.9 365.4 L962.9 362.3 L964.9 369.5 L966.9 364.5 L968.8 369.3 L970.8 366.1 L972.8 364.9 L974.8 370.1 L976.8 360.4 L978.8 367.2 L980.8 358.0 L982.8 370.2 L984.8 365.6 L986.8 367.6 L988.8 356.9 L990.8 370.4 L992.8 360.9 L994.8 365.2 L996.7 358.4 L998.7 364.5 L1000.7 366.2 L1002.7 365.7 L1004.7 363.4 L1006.7 365.5 L1008.7 359.3 L1010.7 367.1 L1012.7 368.2 L1014.7 361.1 L1016.7 366.3 L1018.7 368.7 L1020.7 364.6 L1022.6 363.1 L1024.6 366.0 L1026.6 368.4 L1028.6 362.8 L1030.6 366.7 L1032.6 360.5 L1034.6 365.5 L1036.6 365.6 L1038.6 362.2 L1040.6 367.0 L1042.6 357.1 L1044.6 363.4 L1046.6 363.3 L1048.5 364.4 L1050.5 367.7 L1052.5 357.9 L1054.5 367.3 L1056.5 361.4 L1058.5 368.1 L1060.5 358.0 L1062.5 362.3 L1064.5 360.0 L1066.5 367.4 L1068.5 362.3 L1070.5 359.0 L1072.5 366.7 L1074.5 362.6 L1076.4 367.4 L1078.4 364.9 L1080.4 360.3 L1082.4 370.5 L1084.4 361.0 L1086.4 365.2 L1088.4 360.8 L1090.4 365.1 L1092.4 364.0 L1094.4 365.8 L1096.4 361.7 L1098.4 366.7 L1100.4 363.9 L1102.3 363.4 L1104.3 369.1 L1106.3 366.3 L1108.3 359.0 L1110.3 368.6 L1112.3 363.1 L1114.3 365.4 L1116.3 362.0 L1118.3 371.0 L1120.3 362.1 L1122.3 364.1 L1124.3 367.1 L1126.3 361.5 L1128.3 363.7 L1130.2 362.6 L1132.2 361.0 L1134.2 368.4 L1136.2 359.3 L1138.2 367.2 L1140.2 364.8 L1142.2 359.1 L1144.2 361.2 L1146.2 365.5 L1148.2 364.0 L1150.2 360.6 L1152.2 364.7 L1154.2 359.3 L1156.1 365.4 L1158.1 362.3 L1160.1 360.3 L1162.1 368.0 L1164.1 359.8 L1166.1 362.9 L1168.1 367.4 L1170.1 359.8 L1172.1 368.4 L1174.1 356.9 L1176.1 367.8 L1178.1 365.9 L1180.1 368.7 L1182.1 361.3 L1184.0 364.2 L1186.0 367.1 L1188.0 359.2 L1190.0 367.1 L1192.0 363.7 L1194.0 362.3 L1196.0 362.9 L1198.0 372.4 L1200.0 368.0 L1202.0 365.2 L1204.0 365.4 L1206.0 361.2 L1208.0 361.0 L1209.9 364.1 L1211.9 367.8 L1213.9 361.7 L1215.9 363.4 L1217.9 366.1 L1219.9 360.2 L1221.9 366.0 L1223.9 360.7 L1225.9 358.4 L1227.9 360.1 L1229.9 364.5 L1231.9 367.0 L1233.9 363.0 L1235.8 368.4 L1237.8 365.3 L1239.8 369.5 L1241.8 363.3 L1243.8 370.5 L1245.8 366.5 L1247.8 368.8 L1249.8 362.5 L1251.8 372.6 L1253.8 365.0 L1255.8 371.3 L1257.8 368.5 L1259.8 365.0 L1261.8 371.1 L1263.7 368.1 L1265.7 364.8 L1267.7 364.1 L1269.7 367.4 L1271.7 361.4 L1273.7 366.2 L1275.7 376.1 L1277.7 365.4 L1279.7 371.8 L1281.7 364.2 L1283.7 368.7 L1285.7 367.6 L1287.7 363.5 L1289.6 361.2 L1291.6 364.4 L1293.6 365.4 L1295.6 365.4 L1297.6 368.3 L1299.6 360.6 L1301.6 362.4 L1303.6 370.3 L1305.6 364.6 L1307.6 360.3 L1309.6 365.1 L1311.6 364.1 L1313.6 363.9 L1315.6 362.9 L1317.5 367.7 L1319.5 354.6 L1321.5 365.3 L1323.5 360.9 L1325.5 364.1 L1327.5 360.7 L1329.5 362.6 L1331.5 356.5 L1333.5 364.4 L1335.5 361.6 L1337.5 360.7 L1339.5 361.3 L1341.5 370.1 L1343.4 365.5 L1345.4 369.1 L1347.4 363.8 L1349.4 370.9 L1351.4 365.9 L1353.4 366.6 L1355.4 367.6 L1357.4 368.2 L1359.4 358.0 L1361.4 366.9 L1363.4 368.4 L1365.4 367.2 L1367.4 361.6 L1369.3 367.6 L1371.3 362.2 L1373.3 361.7 L1375.3 366.2 L1377.3 366.8 L1379.3 361.1 L1381.3 368.4 L1383.3 363.2 L1385.3 368.8 L1387.3 370.6 L1389.3 364.5 L1391.3 367.6 L1393.3 360.5 L1395.3 366.7 L1397.2 363.8 L1399.2 363.8 L1401.2 360.2 L1403.2 363.1 L1405.2 368.0 L1407.2 364.7 L1409.2 360.9 L1411.2 364.4 L1413.2 360.8 L1415.2 367.7 L1417.2 357.3 L1419.2 362.5 L1421.2 361.6 L1423.1 365.6 L1425.1 358.0 L1427.1 364.5 L1429.1 360.2 L1431.1 362.2 L1433.1 359.2 L1435.1 370.2 L1437.1 362.0 L1439.1 368.3 L1441.1 360.8 L1443.1 368.8 L1445.1 358.6 L1447.1 368.9 L1449.1 360.0 L1451.0 374.7 L1453.0 361.1 L1455.0 360.4 L1457.0 365.0 L1459.0 359.9 L1461.0 367.4 L1463.0 369.2 L1465.0 363.3 L1467.0 367.0 L1469.0 362.4 L1471.0 365.1 L1473.0 360.6 L1475.0 365.6 L1476.9 365.8 L1478.9 362.8 L1480.9 358.1 L1482.9 352.0 L1484.9 362.3 L1486.9 360.2 L1488.9 367.4 L1490.9 362.2 L1492.9 368.4 L1494.9 362.9 L1496.9 367.1 L1498.9 362.9 L1500.9 368.1 L1502.9 357.6 L1504.8 363.2 L1506.8 359.9 L1508.8 367.9 L1510.8 357.7 L1512.8 364.4 L1514.8 368.5 L1516.8 361.3 L1518.8 362.4 L1520.8 367.4 L1522.8 364.8 L1524.8 368.4 L1526.8 363.3 L1528.8 368.3 L1530.7 372.0 L1532.7 365.4 L1534.7 364.8 L1536.7 366.3 L1538.7 368.7 L1540.7 364.8 L1542.7 366.7 L1544.7 369.9 L1546.7 356.9 L1548.7 366.9 L1550.7 364.4 L1552.7 371.5 L1554.7 366.2 L1556.6 370.2 L1558.6 371.0 L1560.6 367.2 L1562.6 360.1 L1564.6 361.9 L1566.6 367.1 L1568.6 353.0 L1570.6 370.4 L1572.6 369.6 L1574.6 369.4 L1576.6 367.4 L1578.6 370.8 L1580.6 362.4 L1582.6 366.8 L1584.5 366.2 L1586.5 364.0 L1588.5 363.0 L1590.5 373.1 L1592.5 363.8 L1594.5 371.3 L1596.5 369.6 L1598.5 371.9 L1600.5 364.5 L1602.5 370.7 L1604.5 373.2 L1606.5 366.4 L1608.5 372.4 L1610.4 366.8 L1612.4 371.1 L1614.4 367.5 L1616.4 378.5 L1618.4 363.3 L1620.4 369.7 L1622.4 365.1 L1624.4 373.8 L1626.4 369.3 L1628.4 370.3 L1630.4 366.1 L1632.4 370.8 L1634.4 369.8 L1636.4 369.3 L1638.3 375.4 L1640.3 360.4 L1642.3 366.8 L1644.3 368.2 L1646.3 365.3 L1648.3 369.6 L1650.3 356.4 L1652.3 367.8 L1654.3 365.6 L1656.3 357.3 L1658.3 368.2 L1660.3 359.0 L1662.3 368.2 L1664.2 367.4 L1666.2 370.6 L1668.2 366.6 L1670.2 373.2 L1672.2 362.9 L1674.2 369.0 L1676.2 371.6 L1678.2 361.7 L1680.2 366.4 L1682.2 363.7 L1684.2 367.6 L1686.2 367.3 L1688.2 361.4 L1690.1 362.9 L1692.1 368.2 L1694.1 367.7 L1696.1 364.7 L1698.1 371.3 L1700.1 361.3 L1702.1 366.9 L1704.1 363.1 L1706.1 363.0 L1708.1 370.6 L1710.1 369.6 L1712.1 359.8 L1714.1 369.1 L1716.1 363.7 L1718.0 368.0 L1720.0 362.6 L1722.0 369.8 L1724.0 357.9 L1726.0 373.5 L1728.0 361.8 L1730.0 374.9 L1732.0 362.9 L1734.0 370.1 L1736.0 363.1 L1738.0 368.9 L1740.0 364.6 L1742.0 361.9 L1743.9 371.8 L1745.9 368.8 L1747.9 368.3 L1749.9 360.1 L1751.9 361.3 L1753.9 359.1 L1755.9 366.1 L1757.9 359.9 L1759.9 368.4 L1761.9 364.6 L1763.9 365.7 L1765.9 360.0 L1767.9 366.7 L1769.9 358.4 L1771.8 363.2 L1773.8 361.0 L1775.8 361.6 L1777.8 363.6 L1779.8 367.8 L1781.8 356.9 L1783.8 367.7 L1785.8 360.9 L1787.8 363.2 L1789.8 361.0 L1791.8 367.9 L1793.8 365.3 L1795.8 366.8 L1797.7 362.1 L1799.7 362.2 L1801.7 367.2 L1803.7 365.5 L1805.7 366.8 L1807.7 369.0 L1809.7 358.8 L1811.7 365.3 L1813.7 364.6 L1815.7 369.3 L1817.7 360.3 L1819.7 363.1 L1821.7 370.0 L1823.7 367.9 L1825.6 359.5 L1827.6 368.2 L1829.6 369.2 L1831.6 366.5 L1833.6 368.3 L1835.6 359.6 L1837.6 363.1 L1839.6 361.9 L1841.6 368.1 L1843.6 356.8 L1845.6 367.7 L1847.6 364.1 L1849.6 368.3 L1851.5 359.5 L1853.5 371.2 L1855.5 364.4 L1857.5 365.8 L1859.5 370.5 L1861.5 362.9 L1863.5 367.0 L1865.5 359.3 L1867.5 357.0 L1869.5 362.3 L1871.5 363.5 L1873.5 365.1 L1875.5 361.4 L1877.4 369.0 L1879.4 361.3 L1881.4 367.8 L1883.4 360.0 L1885.4 360.5 L1887.4 358.9 L1889.4 366.7 L1891.4 360.8 L1893.4 358.3 L1895.4 363.9 L1897.4 360.3 L1899.4 371.3 L1901.4 363.5 L1903.4 365.0 L1905.3 359.6 L1907.3 364.6 L1909.3 356.6 L1911.3 363.4 L1913.3 360.1 L1915.3 362.3 L1917.3 364.6 L1917.3 451.5 L126.0 451.5 Z" fill="#e5dbe0"/>
<path d="M126.0 272.5H1917.3M126.0 316.5H1917.3M126.0 361.5H1917.3M126.0 406.5H1917.3M126.0 451.5H1917.3M217.5 272.5V451.5M340.5 272.5V451.5M464.5 272.5V451.5M588.5 272.5V451.5M711.5 272.5V451.5M835.5 272.5V451.5M958.5 272.5V451.5M1082.5 272.5V451.5M1205.5 272.5V451.5M1329.5 272.5V451.5M1452.5 272.5V451.5M1576.5 272.5V451.5M1699.5 272.5V451.5M1823.5 272.5V451.5" stroke="#000" stroke-opacity="0.1" stroke-width="1" fill="none"/>
<path d="M126.0 336.5 L128.0 332.1 L130.0 333.8 L132.0 341.0 L134.0 328.3 L136.0 342.9 L138.0 335.5 L139.9 328.9 L141.9 338.4 L143.9 332.4 L145.9 328.4 L147.9 333.0 L149.9 326.7 L151.9 330.7 L153.9 335.2 L155.9 329.2 L157.9 335.8 L159.9 336.8 L161.9 325.5 L163.9 323.1 L165.9 329.4 L167.8 331.5 L169.8 345.7 L171.8 333.8 L173.8 336.9 L175.8 333.2 L177.8 334.4 L179.8 336.0 L181.8 338.4 L183.8 327.4 L185.8 333.5 L187.8 323.4 L189.8 319.8 L191.8 339.4 L193.7 322.7 L195.7 339.1 L197.7 328.3 L199.7 338.1 L201.7 322.2 L203.7 341.4 L205.7 328.5 L207.7 327.1 L209.7 321.4 L211.7 336.3 L213.7 325.5 L215.7 341.1 L217.7 334.3 L219.6 336.9 L221.6 336.8 L223.6 328.9 L225.6 336.4 L227.6 324.0 L229.6 340.8 L231.6 331.9 L233.6 321.6 L235.6 339.2 L237.6 327.7 L239.6 327.0 L241.6 330.4 L243.6 339.7 L245.6 330.5 L247.5 330.3 L249.5 341.8 L251.5 329.1 L253.5 341.0 L255.5 324.7 L257.5 340.2 L259.5 338.1 L261.5 324.5 L263.5 326.7 L265.5 340.2 L267.5 337.0 L269.5 328.7 L271.5 336.9 L273.4 339.6 L275.4 332.7 L277.4 339.7 L279.4 339.2 L281.4 333.5 L283.4 337.8 L285.4 329.7 L287.4 332.6 L289.4 326.7 L291.4 335.3 L293.4 327.3 L295.4 325.3 L297.4 339.3 L299.4 328.3 L301.3 335.7 L303.3 326.4 L305.3 324.9 L307.3 335.7 L309.3 337.5 L311.3 336.4 L313.3 321.0 L315.3 334.9 L317.3 329.8 L319.3 335.5 L321.3 331.6 L323.3 336.1 L325.3 324.5 L327.2 337.0 L329.2 330.6 L331.2 338.3 L333.2 331.3 L335.2 335.9 L337.2 322.2 L339.2 343.3 L341.2 330.4 L343.2 347.3 L345.2 324.3 L347.2 340.4 L349.2 333.5 L351.2 338.0 L353.2 340.6 L355.1 325.3 L357.1 337.5 L359.1 335.1 L361.1 337.2 L363.1 329.4 L365.1 341.7 L367.1 333.6 L369.1 311.0 L371.1 334.5 L373.1 344.4 L375.1 334.1 L377.1 343.6 L379.1 338.9 L381.0 330.5 L383.0 334.1 L385.0 335.8 L387.0 329.2 L389.0 340.2 L391.0 326.1 L393.0 341.2 L395.0 336.2 L397.0 343.8 L399.0 329.5 L401.0 335.7 L403.0 341.0 L405.0 326.3 L406.9 341.9 L408.9 334.6 L410.9 332.8 L412.9 328.0 L414.9 343.5 L416.9 328.3 L418.9 342.0 L420.9 328.3 L422.9 326.9 L424.9 314.3 L426.9 329.3 L428.9 339.7 L430.9 338.7 L432.9 323.3 L434.8 339.8 L436.8 328.6 L438.8 334.2 L440.8 333.4 L442.8 307.7 L444.8 314.0 L446.8 413.9 L448.8 337.3 L450.8 326.9 L452.8 319.8 L454.8 338.8 L456.8 322.2 L458.8 338.4 L460.7 331.8 L462.7 337.6 L464.7 332.3 L466.7 339.8 L468.7 340.4 L470.7 340.4 L472.7 339.0 L474.7 338.2 L476.7 328.9 L478.7 323.0 L480.7 331.2 L482.7 327.5 L484.7 325.9 L486.7 337.2 L488.6 329.7 L490.6 337.8 L492.6 325.5 L494.6 338.3 L496.6 328.6 L498.6 327.9 L500.6 339.0 L502.6 330.9 L504.6 336.8 L506.6 307.0 L508.6 340.5 L510.6 324.6 L512.6 336.6 L514.5 330.8 L516.5 346.1 L518.5 328.4 L520.5 334.3 L522.5 328.2 L524.5 338.5 L526.5 333.2 L528.5 341.7 L530.5 326.2 L532.5 335.8 L534.5 339.6 L536.5 328.3 L538.5 338.6 L540.4 342.0 L542.4 331.0 L544.4 338.5 L546.4 323.2 L548.4 340.4 L550.4 346.0 L552.4 329.8 L554.4 338.5 L556.4 333.2 L558.4 339.6 L560.4 331.0 L562.4 333.1 L564.4 326.3 L566.4 340.2 L568.3 329.2 L570.3 336.9 L572.3 326.6 L574.3 337.9 L576.3 324.9 L578.3 339.0 L580.3 330.6 L582.3 339.3 L584.3 341.2 L586.3 321.1 L588.3 333.2 L590.3 325.6 L592.3 337.5 L594.2 325.3 L596.2 333.6 L598.2 334.9 L600.2 327.8 L602.2 329.9 L604.2 341.6 L606.2 332.4 L608.2 331.8 L610.2 342.6 L612.2 325.0 L614.2 338.8 L616.2 333.5 L618.2 339.7 L620.2 328.3 L622.1 336.0 L624.1 341.5 L626.1 340.5 L628.1 331.9 L630.1 344.6 L632.1 324.6 L634.1 335.4 L636.1 338.5 L638.1 336.8 L640.1 339.5 L642.1 341.6 L644.1 329.2 L646.1 334.4 L648.0 339.6 L650.0 334.4 L652.0 344.0 L654.0 341.7 L656.0 333.8 L658.0 343.4 L660.0 330.9 L662.0 336.9 L664.0 335.0 L666.0 340.9 L668.0 333.1 L670.0 308.8 L672.0 330.1 L674.0 341.9 L675.9 333.7 L677.9 283.3 L679.9 343.0 L681.9 343.3 L683.9 343.2 L685.9 330.1 L687.9 346.6 L689.9 309.9 L691.9 341.5 L693.9 316.5 L695.9 340.3 L697.9 332.5 L699.9 337.7 L701.8 319.7 L703.8 335.4 L705.8 333.3 L707.8 324.1 L709.8 341.3 L711.8 343.9 L713.8 321.4 L715.8 336.0 L717.8 326.7 L719.8 336.6 L721.8 327.3 L723.8 336.4 L725.8 325.0 L727.7 339.6 L729.7 330.5 L731.7 331.0 L733.7 328.0 L735.7 339.8 L737.7 330.3 L739.7 337.9 L741.7 335.3 L743.7 328.0 L745.7 339.2 L747.7 346.8 L749.7 339.1 L751.7 345.1 L753.7 330.3 L755.6 333.5 L757.6 341.6 L759.6 343.9 L761.6 326.5 L763.6 329.8 L765.6 334.5 L767.6 329.1 L769.6 342.6 L771.6 327.3 L773.6 339.4 L775.6 327.8 L777.6 339.1 L779.6 324.1 L781.5 336.9 L783.5 329.6 L785.5 337.1 L787.5 328.7 L789.5 338.5 L791.5 329.7 L793.5 335.6 L795.5 326.8 L797.5 333.2 L799.5 322.1 L801.5 340.6 L803.5 336.8 L805.5 325.2 L807.5 337.5 L809.4 328.4 L811.4 340.4 L813.4 334.5 L815.4 323.2 L817.4 336.3 L819.4 320.3 L821.4 333.4 L823.4 335.6 L825.4 330.2 L827.4 332.4 L829.4 336.5 L831.4 334.3 L833.4 313.2 L835.3 329.7 L837.3 333.4 L839.3 326.4 L841.3 336.0 L843.3 339.5 L845.3 323.1 L847.3 336.0 L849.3 330.2 L851.3 337.6 L853.3 330.9 L855.3 336.9 L857.3 332.6 L859.3 347.5 L861.2 334.2 L863.2 333.7 L865.2 328.8 L867.2 335.9 L869.2 335.4 L871.2 330.1 L873.2 336.1 L875.2 325.8 L877.2 343.4 L879.2 327.1 L881.2 341.5 L883.2 329.7 L885.2 337.7 L887.2 336.9 L889.1 337.8 L891.1 346.6 L893.1 330.7 L895.1 338.5 L897.1 327.7 L899.1 337.8 L901.1 330.8 L903.1 339.4 L905.1 326.7 L907.1 335.6 L909.1 330.7 L911.1 337.2 L913.1 331.8 L915.0 313.0 L917.0 339.9 L919.0 322.9 L921.0 340.0 L923.0 332.3 L925.0 340.7 L927.0 334.8 L929.0 335.1 L931.0 341.1 L933.0 327.2 L935.0 331.3 L937.0 335.9 L939.0 334.2 L941.0 345.3 L942.9 341.0 L944.9 322.7 L946.9 340.0 L948.9 335.0 L950.9 337.3 L952.9 334.2 L954.9 327.6 L956.9 336.8 L958.9 318.6 L960.9 343.7 L962.9 331.7 L964.9 312.0 L966.9 329.1 L968.8 340.6 L970.8 329.9 L972.8 332.8 L974.8 341.1 L976.8 322.8 L978.8 337.0 L980.8 328.0 L982.8 336.4 L984.8 326.8 L986.8 337.9 L988.8 323.2 L990.8 339.0 L992.8 328.7 L994.8 335.4 L996.7 328.8 L998.7 326.6 L1000.7 343.1 L1002.7 338.3 L1004.7 317.1 L1006.7 341.2 L1008.7 327.2 L1010.7 336.1 L1012.7 336.3 L1014.7 328.7 L1016.7 338.0 L1018.7 342.2 L1020.7 332.9 L1022.6 319.7 L1024.6 335.6 L1026.6 341.2 L1028.6 320.3 L1030.6 335.1 L1032.6 328.4 L1034.6 338.3 L1036.6 333.9 L1038.6 338.5 L1040.6 337.1 L1042.6 321.3 L1044.6 339.3 L1046.6 336.9 L1048.5 331.8 L1050.5 338.4 L1052.5 325.2 L1054.5 337.4 L1056.5 330.7 L1058.5 337.1 L1060.5 329.2 L1062.5 338.8 L1064.5 320.4 L1066.5 341.2 L1068.5 339.8 L1070.5 327.7 L1072.5 336.9 L1074.5 326.9 L1076.4 338.3 L1078.4 331.6 L1080.4 320.7 L1082.4 333.2 L1084.4 327.5 L1086.4 339.1 L1088.4 326.6 L1090.4 337.5 L1092.4 323.8 L1094.4 333.6 L1096.4 327.2 L1098.4 331.7 L1100.4 341.4 L1102.3 324.4 L1104.3 314.0 L1106.3 331.9 L1108.3 326.1 L1110.3 337.1 L1112.3 329.6 L1114.3 336.0 L1116.3 329.2 L1118.3 340.3 L1120.3 330.3 L1122.3 326.0 L1124.3 338.5 L1126.3 318.0 L1128.3 336.9 L1130.2 341.8 L1132.2 328.3 L1134.2 338.7 L1136.2 332.5 L1138.2 340.1 L1140.2 334.7 L1142.2 327.7 L1144.2 330.4 L1146.2 333.8 L1148.2 335.8 L1150.2 327.4 L1152.2 335.5 L1154.2 328.7 L1156.1 342.1 L1158.1 322.0 L1160.1 326.8 L1162.1 340.6 L1164.1 304.4 L1166.1 333.0 L1168.1 340.3 L1170.1 328.7 L1172.1 336.1 L1174.1 334.7 L1176.1 345.4 L1178.1 335.6 L1180.1 346.6 L1182.1 330.0 L1184.0 329.6 L1186.0 339.0 L1188.0 330.9 L1190.0 340.5 L1192.0 334.3 L1194.0 340.1 L1196.0 334.4 L1198.0 344.1 L1200.0 337.0 L1202.0 312.8 L1204.0 341.3 L1206.0 331.1 L1208.0 339.5 L1209.9 325.8 L1211.9 336.1 L1213.9 326.1 L1215.9 333.0 L1217.9 336.4 L1219.9 331.7 L1221.9 340.1 L1223.9 333.5 L1225.9 331.5 L1227.9 327.4 L1229.9 330.4 L1231.9 339.2 L1233.9 331.1 L1235.8 343.3 L1237.8 322.7 L1239.8 343.1 L1241.8 329.4 L1243.8 340.4 L1245.8 335.1 L1247.8 335.4 L1249.8 326.0 L1251.8 313.5 L1253.8 327.0 L1255.8 338.4 L1257.8 339.7 L1259.8 327.8 L1261.8 312.5 L1263.7 329.9 L1265.7 338.5 L1267.7 326.3 L1269.7 338.0 L1271.7 322.3 L1273.7 341.2 L1275.7 335.5 L1277.7 326.7 L1279.7 339.0 L1281.7 322.5 L1283.7 333.7 L1285.7 340.0 L1287.7 324.9 L1289.6 326.3 L1291.6 330.3 L1293.6 344.8 L1295.6 325.0 L1297.6 341.4 L1299.6 327.3 L1301.6 330.6 L1303.6 335.7 L1305.6 323.8 L1307.6 328.0 L1309.6 338.1 L1311.6 327.1 L1313.6 335.1 L1315.6 328.3 L1317.5 339.0 L1319.5 328.0 L1321.5 297.7 L1323.5 328.4 L1325.5 333.5 L1327.5 329.6 L1329.5 337.2 L1331.5 324.1 L1333.5 333.4 L1335.5 324.7 L1337.5 330.5 L1339.5 330.0 L1341.5 339.4 L1343.4 323.3 L1345.4 343.5 L1347.4 331.5 L1349.4 339.4 L1351.4 334.6 L1353.4 343.5 L1355.4 324.9 L1357.4 341.1 L1359.4 307.0 L1361.4 334.4 L1363.4 334.5 L1365.4 350.8 L1367.4 319.3 L1369.3 333.6 L1371.3 324.6 L1373.3 320.6 L1375.3 339.1 L1377.3 343.0 L1379.3 331.8 L1381.3 340.3 L1383.3 329.3 L1385.3 345.4 L1387.3 343.8 L1389.3 327.2 L1391.3 345.2 L1393.3 334.3 L1395.3 342.1 L1397.2 330.6 L1399.2 334.5 L1401.2 318.8 L1403.2 325.8 L1405.2 338.5 L1407.2 341.7 L1409.2 328.4 L1411.2 337.5 L1413.2 329.7 L1415.2 332.3 L1417.2 329.4 L1419.2 337.9 L1421.2 328.1 L1423.1 338.4 L1425.1 306.0 L1427.1 334.9 L1429.1 324.9 L1431.1 326.1 L1433.1 329.9 L1435.1 341.3 L1437.1 326.3 L1439.1 338.3 L1441.1 332.1 L1443.1 333.3 L1445.1 329.1 L1447.1 340.1 L1449.1 329.0 L1451.0 341.3 L1453.0 331.0 L1455.0 322.8 L1457.0 332.9 L1459.0 328.6 L1461.0 334.3 L1463.0 331.8 L1465.0 324.5 L1467.0 332.6 L1469.0 312.0 L1471.0 337.4 L1473.0 325.3 L1475.0 338.4 L1476.9 334.2 L1478.9 328.5 L1480.9 332.5 L1482.9 343.2 L1484.9 331.5 L1486.9 339.3 L1488.9 344.2 L1490.9 332.5 L1492.9 340.7 L1494.9 333.0 L1496.9 342.3 L1498.9 332.9 L1500.9 341.9 L1502.9 329.5 L1504.8 339.6 L1506.8 321.7 L1508.8 334.1 L1510.8 329.2 L1512.8 341.2 L1514.8 346.1 L1516.8 326.9 L1518.8 337.0 L1520.8 341.0 L1522.8 334.3 L1524.8 337.3 L1526.8 333.5 L1528.8 342.2 L1530.7 341.8 L1532.7 332.9 L1534.7 316.0 L1536.7 333.0 L1538.7 337.5 L1540.7 326.3 L1542.7 334.3 L1544.7 339.0 L1546.7 331.2 L1548.7 340.8 L1550.7 328.1 L1552.7 341.5 L1554.7 331.9 L1556.6 344.7 L1558.6 337.8 L1560.6 340.2 L1562.6 332.0 L1564.6 331.1 L1566.6 338.2 L1568.6 330.4 L1570.6 340.8 L1572.6 328.2 L1574.6 339.6 L1576.6 327.0 L1578.6 342.6 L1580.6 328.7 L1582.6 339.7 L1584.5 342.8 L1586.5 330.0 L1588.5 330.9 L1590.5 340.7 L1592.5 328.3 L1594.5 342.0 L1596.5 331.6 L1598.5 341.3 L1600.5 320.4 L1602.5 334.0 L1604.5 340.0 L1606.5 329.7 L1608.5 337.3 L1610.4 325.3 L1612.4 337.1 L1614.4 320.7 L1616.4 339.2 L1618.4 328.1 L1620.4 340.8 L1622.4 331.7 L1624.4 336.7 L1626.4 328.2 L1628.4 343.0 L1630.4 323.6 L1632.4 343.1 L1634.4 339.7 L1636.4 331.5 L1638.3 335.3 L1640.3 325.3 L1642.3 334.9 L1644.3 335.4 L1646.3 315.4 L1648.3 337.4 L1650.3 327.0 L1652.3 333.4 L1654.3 333.5 L1656.3 326.7 L1658.3 334.0 L1660.3 334.3 L1662.3 336.1 L1664.2 322.7 L1666.2 337.1 L1668.2 336.1 L1670.2 340.7 L1672.2 325.2 L1674.2 344.9 L1676.2 337.7 L1678.2 336.5 L1680.2 343.0 L1682.2 332.3 L1684.2 340.2 L1686.2 338.0 L1688.2 331.5 L1690.1 343.9 L1692.1 344.6 L1694.1 343.8 L1696.1 330.1 L1698.1 337.9 L1700.1 325.8 L1702.1 342.3 L1704.1 321.2 L1706.1 331.8 L1708.1 341.7 L1710.1 338.7 L1712.1 325.6 L1714.1 340.0 L1716.1 329.9 L1718.0 340.7 L1720.0 329.8 L1722.0 335.5 L1724.0 325.8 L1726.0 335.3 L1728.0 330.2 L1730.0 339.1 L1732.0 325.9 L1734.0 336.6 L1736.0 326.9 L1738.0 332.8 L1740.0 321.7 L1742.0 312.0 L1743.9 345.3 L1745.9 338.6 L1747.9 340.5 L1749.9 329.1 L1751.9 340.4 L1753.9 321.4 L1755.9 338.4 L1757.9 334.0 L1759.9 337.8 L1761.9 329.6 L1763.9 343.7 L1765.9 327.6 L1767.9 342.4 L1769.9 332.5 L1771.8 334.0 L1773.8 329.0 L1775.8 339.7 L1777.8 326.7 L1779.8 340.3 L1781.8 329.9 L1783.8 334.4 L1785.8 327.8 L1787.8 334.8 L1789.8 328.5 L1791.8 334.8 L1793.8 332.2 L1795.8 337.8 L1797.7 332.2 L1799.7 323.1 L1801.7 339.1 L1803.7 326.0 L1805.7 330.7 L1807.7 337.1 L1809.7 325.7 L1811.7 312.0 L1813.7 320.6 L1815.7 337.9 L1817.7 333.5 L1819.7 330.0 L1821.7 338.0 L1823.7 339.7 L1825.6 329.4 L1827.6 339.8 L1829.6 339.7 L1831.6 328.0 L1833.6 338.0 L1835.6 331.2 L1837.6 336.5 L1839.6 331.1 L1841.6 341.0 L1843.6 334.9 L1845.6 338.7 L1847.6 335.7 L1849.6 339.2 L1851.5 337.0 L1853.5 342.4 L1855.5 333.4 L1857.5 344.2 L1859.5 344.5 L1861.5 334.8 L1863.5 344.8 L1865.5 324.3 L1867.5 334.6 L1869.5 344.1 L1871.5 332.7 L1873.5 340.9 L1875.5 327.3 L1877.4 345.9 L1879.4 333.8 L1881.4 335.9 L1883.4 334.0 L1885.4 332.4 L1887.4 333.4 L1889.4 335.7 L1891.4 323.4 L1893.4 329.3 L1895.4 342.4 L1897.4 333.7 L1899.4 342.2 L1901.4 330.0 L1903.4 337.2 L1905.3 330.9 L1907.3 333.6 L1909.3 327.6 L1911.3 336.1 L1913.3 328.2 L1915.3 318.7 L1917.3 338.6" fill="none" stroke="#1f5aa8" stroke-width="1.15" stroke-linejoin="miter" stroke-miterlimit="3"/>
<path d="M126.0 369.3 L128.0 363.8 L130.0 361.9 L132.0 368.1 L134.0 366.2 L136.0 370.9 L138.0 369.9 L139.9 364.9 L141.9 370.6 L143.9 363.4 L145.9 362.7 L147.9 365.8 L149.9 363.8 L151.9 357.0 L153.9 367.1 L155.9 365.0 L157.9 366.0 L159.9 367.2 L161.9 362.3 L163.9 360.6 L165.9 361.4 L167.8 361.5 L169.8 365.5 L171.8 361.5 L173.8 370.3 L175.8 361.0 L177.8 364.8 L179.8 366.3 L181.8 368.1 L183.8 357.3 L185.8 369.7 L187.8 361.8 L189.8 363.5 L191.8 366.9 L193.7 357.6 L195.7 365.7 L197.7 363.9 L199.7 368.2 L201.7 362.7 L203.7 370.7 L205.7 362.4 L207.7 365.2 L209.7 363.6 L211.7 367.4 L213.7 364.8 L215.7 368.3 L217.7 363.0 L219.6 369.5 L221.6 366.9 L223.6 365.3 L225.6 369.6 L227.6 362.3 L229.6 367.4 L231.6 367.0 L233.6 362.2 L235.6 367.2 L237.6 363.7 L239.6 365.6 L241.6 361.8 L243.6 364.3 L245.6 366.2 L247.5 360.2 L249.5 368.5 L251.5 359.8 L253.5 369.2 L255.5 364.5 L257.5 365.6 L259.5 367.3 L261.5 362.2 L263.5 357.8 L265.5 364.9 L267.5 366.9 L269.5 357.7 L271.5 366.8 L273.4 362.5 L275.4 357.5 L277.4 365.0 L279.4 363.4 L281.4 362.1 L283.4 364.7 L285.4 360.2 L287.4 363.3 L289.4 359.5 L291.4 369.7 L293.4 363.1 L295.4 354.4 L297.4 366.5 L299.4 360.9 L301.3 363.1 L303.3 359.7 L305.3 359.1 L307.3 359.6 L309.3 364.2 L311.3 362.9 L313.3 356.4 L315.3 364.3 L317.3 358.5 L319.3 364.4 L321.3 362.0 L323.3 363.6 L325.3 353.6 L327.2 367.2 L329.2 360.9 L331.2 365.8 L333.2 361.6 L335.2 368.1 L337.2 361.7 L339.2 367.7 L341.2 364.7 L343.2 366.2 L345.2 361.5 L347.2 364.2 L349.2 361.7 L351.2 368.4 L353.2 367.5 L355.1 364.3 L357.1 365.0 L359.1 358.7 L361.1 364.6 L363.1 360.5 L365.1 366.0 L367.1 359.8 L369.1 367.9 L371.1 362.0 L373.1 364.9 L375.1 363.8 L377.1 367.0 L379.1 365.0 L381.0 362.0 L383.0 373.8 L385.0 366.2 L387.0 367.6 L389.0 365.3 L391.0 362.3 L393.0 369.9 L395.0 365.2 L397.0 367.4 L399.0 360.7 L401.0 368.0 L403.0 370.5 L405.0 362.8 L406.9 368.1 L408.9 361.8 L410.9 365.7 L412.9 361.1 L414.9 365.6 L416.9 363.9 L418.9 368.3 L420.9 360.9 L422.9 364.6 L424.9 363.4 L426.9 364.0 L428.9 369.1 L430.9 368.4 L432.9 363.7 L434.8 369.4 L436.8 365.3 L438.8 368.7 L440.8 364.4 L442.8 369.9 L444.8 368.9 L446.8 430.2 L448.8 371.4 L450.8 363.8 L452.8 358.5 L454.8 362.4 L456.8 364.5 L458.8 368.2 L460.7 360.5 L462.7 368.0 L464.7 359.0 L466.7 368.5 L468.7 365.4 L470.7 366.5 L472.7 366.5 L474.7 363.8 L476.7 359.4 L478.7 362.6 L480.7 368.3 L482.7 361.5 L484.7 361.3 L486.7 366.0 L488.6 362.3 L490.6 364.1 L492.6 359.2 L494.6 368.1 L496.6 360.6 L498.6 363.2 L500.6 368.2 L502.6 361.0 L504.6 368.0 L506.6 362.5 L508.6 366.9 L510.6 358.9 L512.6 365.4 L514.5 361.1 L516.5 365.9 L518.5 365.1 L520.5 369.2 L522.5 361.9 L524.5 366.7 L526.5 357.9 L528.5 365.8 L530.5 358.1 L532.5 364.7 L534.5 366.9 L536.5 360.3 L538.5 365.7 L540.4 366.7 L542.4 359.2 L544.4 366.5 L546.4 359.1 L548.4 365.2 L550.4 366.9 L552.4 362.2 L554.4 366.1 L556.4 364.1 L558.4 367.6 L560.4 358.1 L562.4 368.4 L564.4 359.4 L566.4 368.6 L568.3 359.8 L570.3 368.9 L572.3 362.9 L574.3 368.6 L576.3 362.9 L578.3 371.6 L580.3 357.4 L582.3 366.6 L584.3 365.9 L586.3 360.3 L588.3 367.7 L590.3 360.3 L592.3 368.6 L594.2 361.5 L596.2 357.6 L598.2 368.0 L600.2 361.4 L602.2 357.0 L604.2 367.8 L606.2 352.6 L608.2 359.1 L610.2 365.4 L612.2 361.8 L614.2 370.2 L616.2 364.3 L618.2 369.0 L620.2 364.6 L622.1 362.4 L624.1 367.4 L626.1 369.4 L628.1 366.4 L630.1 365.9 L632.1 362.8 L634.1 364.4 L636.1 368.0 L638.1 362.4 L640.1 367.9 L642.1 370.0 L644.1 358.1 L646.1 358.7 L648.0 373.2 L650.0 361.1 L652.0 368.1 L654.0 365.8 L656.0 362.8 L658.0 369.3 L660.0 363.7 L662.0 370.5 L664.0 360.2 L666.0 364.4 L668.0 356.3 L670.0 363.1 L672.0 359.7 L674.0 363.8 L675.9 361.2 L677.9 363.6 L679.9 356.6 L681.9 366.8 L683.9 365.6 L685.9 355.0 L687.9 366.9 L689.9 360.2 L691.9 365.7 L693.9 362.5 L695.9 371.7 L697.9 360.9 L699.9 362.2 L701.8 361.1 L703.8 367.9 L705.8 361.1 L707.8 359.4 L709.8 366.6 L711.8 361.7 L713.8 358.2 L715.8 363.3 L717.8 360.1 L719.8 362.9 L721.8 361.4 L723.8 361.7 L725.8 359.3 L727.7 366.0 L729.7 357.5 L731.7 362.7 L733.7 364.2 L735.7 363.7 L737.7 362.8 L739.7 372.1 L741.7 369.6 L743.7 362.8 L745.7 366.0 L747.7 368.8 L749.7 366.7 L751.7 366.8 L753.7 362.7 L755.6 364.6 L757.6 365.3 L759.6 370.6 L761.6 362.6 L763.6 364.6 L765.6 369.6 L767.6 363.5 L769.6 367.1 L771.6 362.0 L773.6 368.4 L775.6 362.3 L777.6 367.8 L779.6 357.9 L781.5 371.5 L783.5 355.2 L785.5 369.5 L787.5 362.3 L789.5 368.0 L791.5 363.0 L793.5 365.8 L795.5 362.6 L797.5 365.6 L799.5 361.1 L801.5 371.5 L803.5 374.1 L805.5 364.2 L807.5 366.5 L809.4 363.3 L811.4 368.3 L813.4 365.8 L815.4 358.7 L817.4 368.3 L819.4 360.5 L821.4 364.3 L823.4 369.7 L825.4 361.6 L827.4 368.0 L829.4 368.5 L831.4 368.5 L833.4 364.2 L835.3 363.6 L837.3 364.7 L839.3 360.4 L841.3 366.4 L843.3 368.6 L845.3 361.9 L847.3 367.1 L849.3 360.9 L851.3 367.4 L853.3 363.0 L855.3 366.8 L857.3 362.8 L859.3 361.7 L861.2 367.8 L863.2 370.0 L865.2 366.8 L867.2 367.2 L869.2 370.2 L871.2 362.6 L873.2 366.6 L875.2 356.6 L877.2 375.5 L879.2 360.6 L881.2 366.2 L883.2 360.9 L885.2 365.0 L887.2 358.3 L889.1 365.2 L891.1 364.6 L893.1 366.4 L895.1 369.5 L897.1 365.1 L899.1 365.3 L901.1 365.1 L903.1 370.0 L905.1 361.8 L907.1 369.7 L909.1 360.5 L911.1 365.1 L913.1 358.0 L915.0 363.3 L917.0 368.1 L919.0 357.1 L921.0 367.2 L923.0 357.1 L925.0 364.9 L927.0 360.9 L929.0 362.8 L931.0 364.2 L933.0 360.1 L935.0 358.3 L937.0 367.3 L939.0 356.2 L941.0 364.2 L942.9 367.8 L944.9 356.0 L946.9 364.7 L948.9 360.7 L950.9 369.6 L952.9 371.0 L954.9 360.4 L956.9 367.3 L958.9 363.2 L960.9 365.4 L962.9 362.3 L964.9 369.5 L966.9 364.5 L968.8 369.3 L970.8 366.1 L972.8 364.9 L974.8 370.1 L976.8 360.4 L978.8 367.2 L980.8 358.0 L982.8 370.2 L984.8 365.6 L986.8 367.6 L988.8 356.9 L990.8 370.4 L992.8 360.9 L994.8 365.2 L996.7 358.4 L998.7 364.5 L1000.7 366.2 L1002.7 365.7 L1004.7 363.4 L1006.7 365.5 L1008.7 359.3 L1010.7 367.1 L1012.7 368.2 L1014.7 361.1 L1016.7 366.3 L1018.7 368.7 L1020.7 364.6 L1022.6 363.1 L1024.6 366.0 L1026.6 368.4 L1028.6 362.8 L1030.6 366.7 L1032.6 360.5 L1034.6 365.5 L1036.6 365.6 L1038.6 362.2 L1040.6 367.0 L1042.6 357.1 L1044.6 363.4 L1046.6 363.3 L1048.5 364.4 L1050.5 367.7 L1052.5 357.9 L1054.5 367.3 L1056.5 361.4 L1058.5 368.1 L1060.5 358.0 L1062.5 362.3 L1064.5 360.0 L1066.5 367.4 L1068.5 362.3 L1070.5 359.0 L1072.5 366.7 L1074.5 362.6 L1076.4 367.4 L1078.4 364.9 L1080.4 360.3 L1082.4 370.5 L1084.4 361.0 L1086.4 365.2 L1088.4 360.8 L1090.4 365.1 L1092.4 364.0 L1094.4 365.8 L1096.4 361.7 L1098.4 366.7 L1100.4 363.9 L1102.3 363.4 L1104.3 369.1 L1106.3 366.3 L1108.3 359.0 L1110.3 368.6 L1112.3 363.1 L1114.3 365.4 L1116.3 362.0 L1118.3 371.0 L1120.3 362.1 L1122.3 364.1 L1124.3 367.1 L1126.3 361.5 L1128.3 363.7 L1130.2 362.6 L1132.2 361.0 L1134.2 368.4 L1136.2 359.3 L1138.2 367.2 L1140.2 364.8 L1142.2 359.1 L1144.2 361.2 L1146.2 365.5 L1148.2 364.0 L1150.2 360.6 L1152.2 364.7 L1154.2 359.3 L1156.1 365.4 L1158.1 362.3 L1160.1 360.3 L1162.1 368.0 L1164.1 359.8 L1166.1 362.9 L1168.1 367.4 L1170.1 359.8 L1172.1 368.4 L1174.1 356.9 L1176.1 367.8 L1178.1 365.9 L1180.1 368.7 L1182.1 361.3 L1184.0 364.2 L1186.0 367.1 L1188.0 359.2 L1190.0 367.1 L1192.0 363.7 L1194.0 362.3 L1196.0 362.9 L1198.0 372.4 L1200.0 368.0 L1202.0 365.2 L1204.0 365.4 L1206.0 361.2 L1208.0 361.0 L1209.9 364.1 L1211.9 367.8 L1213.9 361.7 L1215.9 363.4 L1217.9 366.1 L1219.9 360.2 L1221.9 366.0 L1223.9 360.7 L1225.9 358.4 L1227.9 360.1 L1229.9 364.5 L1231.9 367.0 L1233.9 363.0 L1235.8 368.4 L1237.8 365.3 L1239.8 369.5 L1241.8 363.3 L1243.8 370.5 L1245.8 366.5 L1247.8 368.8 L1249.8 362.5 L1251.8 372.6 L1253.8 365.0 L1255.8 371.3 L1257.8 368.5 L1259.8 365.0 L1261.8 371.1 L1263.7 368.1 L1265.7 364.8 L1267.7 364.1 L1269.7 367.4 L1271.7 361.4 L1273.7 366.2 L1275.7 376.1 L1277.7 365.4 L1279.7 371.8 L1281.7 364.2 L1283.7 368.7 L1285.7 367.6 L1287.7 363.5 L1289.6 361.2 L1291.6 364.4 L1293.6 365.4 L1295.6 365.4 L1297.6 368.3 L1299.6 360.6 L1301.6 362.4 L1303.6 370.3 L1305.6 364.6 L1307.6 360.3 L1309.6 365.1 L1311.6 364.1 L1313.6 363.9 L1315.6 362.9 L1317.5 367.7 L1319.5 354.6 L1321.5 365.3 L1323.5 360.9 L1325.5 364.1 L1327.5 360.7 L1329.5 362.6 L1331.5 356.5 L1333.5 364.4 L1335.5 361.6 L1337.5 360.7 L1339.5 361.3 L1341.5 370.1 L1343.4 365.5 L1345.4 369.1 L1347.4 363.8 L1349.4 370.9 L1351.4 365.9 L1353.4 366.6 L1355.4 367.6 L1357.4 368.2 L1359.4 358.0 L1361.4 366.9 L1363.4 368.4 L1365.4 367.2 L1367.4 361.6 L1369.3 367.6 L1371.3 362.2 L1373.3 361.7 L1375.3 366.2 L1377.3 366.8 L1379.3 361.1 L1381.3 368.4 L1383.3 363.2 L1385.3 368.8 L1387.3 370.6 L1389.3 364.5 L1391.3 367.6 L1393.3 360.5 L1395.3 366.7 L1397.2 363.8 L1399.2 363.8 L1401.2 360.2 L1403.2 363.1 L1405.2 368.0 L1407.2 364.7 L1409.2 360.9 L1411.2 364.4 L1413.2 360.8 L1415.2 367.7 L1417.2 357.3 L1419.2 362.5 L1421.2 361.6 L1423.1 365.6 L1425.1 358.0 L1427.1 364.5 L1429.1 360.2 L1431.1 362.2 L1433.1 359.2 L1435.1 370.2 L1437.1 362.0 L1439.1 368.3 L1441.1 360.8 L1443.1 368.8 L1445.1 358.6 L1447.1 368.9 L1449.1 360.0 L1451.0 374.7 L1453.0 361.1 L1455.0 360.4 L1457.0 365.0 L1459.0 359.9 L1461.0 367.4 L1463.0 369.2 L1465.0 363.3 L1467.0 367.0 L1469.0 362.4 L1471.0 365.1 L1473.0 360.6 L1475.0 365.6 L1476.9 365.8 L1478.9 362.8 L1480.9 358.1 L1482.9 352.0 L1484.9 362.3 L1486.9 360.2 L1488.9 367.4 L1490.9 362.2 L1492.9 368.4 L1494.9 362.9 L1496.9 367.1 L1498.9 362.9 L1500.9 368.1 L1502.9 357.6 L1504.8 363.2 L1506.8 359.9 L1508.8 367.9 L1510.8 357.7 L1512.8 364.4 L1514.8 368.5 L1516.8 361.3 L1518.8 362.4 L1520.8 367.4 L1522.8 364.8 L1524.8 368.4 L1526.8 363.3 L1528.8 368.3 L1530.7 372.0 L1532.7 365.4 L1534.7 364.8 L1536.7 366.3 L1538.7 368.7 L1540.7 364.8 L1542.7 366.7 L1544.7 369.9 L1546.7 356.9 L1548.7 366.9 L1550.7 364.4 L1552.7 371.5 L1554.7 366.2 L1556.6 370.2 L1558.6 371.0 L1560.6 367.2 L1562.6 360.1 L1564.6 361.9 L1566.6 367.1 L1568.6 353.0 L1570.6 370.4 L1572.6 369.6 L1574.6 369.4 L1576.6 367.4 L1578.6 370.8 L1580.6 362.4 L1582.6 366.8 L1584.5 366.2 L1586.5 364.0 L1588.5 363.0 L1590.5 373.1 L1592.5 363.8 L1594.5 371.3 L1596.5 369.6 L1598.5 371.9 L1600.5 364.5 L1602.5 370.7 L1604.5 373.2 L1606.5 366.4 L1608.5 372.4 L1610.4 366.8 L1612.4 371.1 L1614.4 367.5 L1616.4 378.5 L1618.4 363.3 L1620.4 369.7 L1622.4 365.1 L1624.4 373.8 L1626.4 369.3 L1628.4 370.3 L1630.4 366.1 L1632.4 370.8 L1634.4 369.8 L1636.4 369.3 L1638.3 375.4 L1640.3 360.4 L1642.3 366.8 L1644.3 368.2 L1646.3 365.3 L1648.3 369.6 L1650.3 356.4 L1652.3 367.8 L1654.3 365.6 L1656.3 357.3 L1658.3 368.2 L1660.3 359.0 L1662.3 368.2 L1664.2 367.4 L1666.2 370.6 L1668.2 366.6 L1670.2 373.2 L1672.2 362.9 L1674.2 369.0 L1676.2 371.6 L1678.2 361.7 L1680.2 366.4 L1682.2 363.7 L1684.2 367.6 L1686.2 367.3 L1688.2 361.4 L1690.1 362.9 L1692.1 368.2 L1694.1 367.7 L1696.1 364.7 L1698.1 371.3 L1700.1 361.3 L1702.1 366.9 L1704.1 363.1 L1706.1 363.0 L1708.1 370.6 L1710.1 369.6 L1712.1 359.8 L1714.1 369.1 L1716.1 363.7 L1718.0 368.0 L1720.0 362.6 L1722.0 369.8 L1724.0 357.9 L1726.0 373.5 L1728.0 361.8 L1730.0 374.9 L1732.0 362.9 L1734.0 370.1 L1736.0 363.1 L1738.0 368.9 L1740.0 364.6 L1742.0 361.9 L1743.9 371.8 L1745.9 368.8 L1747.9 368.3 L1749.9 360.1 L1751.9 361.3 L1753.9 359.1 L1755.9 366.1 L1757.9 359.9 L1759.9 368.4 L1761.9 364.6 L1763.9 365.7 L1765.9 360.0 L1767.9 366.7 L1769.9 358.4 L1771.8 363.2 L1773.8 361.0 L1775.8 361.6 L1777.8 363.6 L1779.8 367.8 L1781.8 356.9 L1783.8 367.7 L1785.8 360.9 L1787.8 363.2 L1789.8 361.0 L1791.8 367.9 L1793.8 365.3 L1795.8 366.8 L1797.7 362.1 L1799.7 362.2 L1801.7 367.2 L1803.7 365.5 L1805.7 366.8 L1807.7 369.0 L1809.7 358.8 L1811.7 365.3 L1813.7 364.6 L1815.7 369.3 L1817.7 360.3 L1819.7 363.1 L1821.7 370.0 L1823.7 367.9 L1825.6 359.5 L1827.6 368.2 L1829.6 369.2 L1831.6 366.5 L1833.6 368.3 L1835.6 359.6 L1837.6 363.1 L1839.6 361.9 L1841.6 368.1 L1843.6 356.8 L1845.6 367.7 L1847.6 364.1 L1849.6 368.3 L1851.5 359.5 L1853.5 371.2 L1855.5 364.4 L1857.5 365.8 L1859.5 370.5 L1861.5 362.9 L1863.5 367.0 L1865.5 359.3 L1867.5 357.0 L1869.5 362.3 L1871.5 363.5 L1873.5 365.1 L1875.5 361.4 L1877.4 369.0 L1879.4 361.3 L1881.4 367.8 L1883.4 360.0 L1885.4 360.5 L1887.4 358.9 L1889.4 366.7 L1891.4 360.8 L1893.4 358.3 L1895.4 363.9 L1897.4 360.3 L1899.4 371.3 L1901.4 363.5 L1903.4 365.0 L1905.3 359.6 L1907.3 364.6 L1909.3 356.6 L1911.3 363.4 L1913.3 360.1 L1915.3 362.3 L1917.3 364.6" fill="none" stroke="#e2534a" stroke-width="1.05" stroke-linejoin="miter" stroke-miterlimit="3"/>
<rect x="120.0" y="553" width="1797.3" height="121" fill="#fcecea"/>
<path d="M120.0 552.5H1917.3M120.0 587.5H1917.3M120.0 623.5H1917.3M120.0 659.5H1917.3M120.0 695.5H1917.3M120.0 731.5H1917.3M211.5 552.5V731.5M335.5 552.5V731.5M459.5 552.5V731.5M583.5 552.5V731.5M707.5 552.5V731.5M831.5 552.5V731.5M955.5 552.5V731.5M1079.5 552.5V731.5M1203.5 552.5V731.5M1327.5 552.5V731.5M1451.5 552.5V731.5M1575.5 552.5V731.5M1698.5 552.5V731.5M1822.5 552.5V731.5" stroke="#000" stroke-opacity="0.075" stroke-width="1" fill="none"/>
<path d="M120.0 674H1917.3" stroke="#f06a5e" stroke-width="2"/>
<path d="M120.0 731.5H440.1L441.2 588L443.3 588L444.3 731.5H1917.3" fill="none" stroke="#1a52a3" stroke-width="1.1"/>
</svg>
<div class="ax" style="left:959.3px;top:130.5px;font-size:12px;color:#4a4d55;font-weight:bold;transform:translateX(-50%);">Barnet College Ping</div>
<div class="ax" style="left:64.8px;top:155.0px;font-size:11px;color:#3b3f46;font-weight:normal;transform:translateX(-100%);">3.0 ms</div>
<div class="ax" style="left:64.8px;top:199.8px;font-size:11px;color:#3b3f46;font-weight:normal;transform:translateX(-100%);">2.5 ms</div>
<div class="ax" style="left:64.8px;top:244.5px;font-size:11px;color:#3b3f46;font-weight:normal;transform:translateX(-100%);">2.0 ms</div>
<div class="ax" style="left:64.8px;top:289.2px;font-size:11px;color:#3b3f46;font-weight:normal;transform:translateX(-100%);">1.5 ms</div>
<div class="ax" style="left:64.8px;top:334.0px;font-size:11px;color:#3b3f46;font-weight:normal;transform:translateX(-100%);">1.0 ms</div>
<div class="ax" style="left:161.5px;top:348.0px;font-size:11px;color:#3b3f46;font-weight:normal;transform:translateX(-50%);">6/29 08:00</div>
<div class="ax" style="left:284.5px;top:348.0px;font-size:11px;color:#3b3f46;font-weight:normal;transform:translateX(-50%);">6/29 16:00</div>
<div class="ax" style="left:408.5px;top:348.0px;font-size:11px;color:#3b3f46;font-weight:normal;transform:translateX(-50%);">6/30 00:00</div>
<div class="ax" style="left:532.5px;top:348.0px;font-size:11px;color:#3b3f46;font-weight:normal;transform:translateX(-50%);">6/30 08:00</div>
<div class="ax" style="left:655.5px;top:348.0px;font-size:11px;color:#3b3f46;font-weight:normal;transform:translateX(-50%);">6/30 16:00</div>
<div class="ax" style="left:779.5px;top:348.0px;font-size:11px;color:#3b3f46;font-weight:normal;transform:translateX(-50%);">7/1 00:00</div>
<div class="ax" style="left:902.5px;top:348.0px;font-size:11px;color:#3b3f46;font-weight:normal;transform:translateX(-50%);">7/1 08:00</div>
<div class="ax" style="left:1026.5px;top:348.0px;font-size:11px;color:#3b3f46;font-weight:normal;transform:translateX(-50%);">7/1 16:00</div>
<div class="ax" style="left:1149.5px;top:348.0px;font-size:11px;color:#3b3f46;font-weight:normal;transform:translateX(-50%);">7/2 00:00</div>
<div class="ax" style="left:1273.5px;top:348.0px;font-size:11px;color:#3b3f46;font-weight:normal;transform:translateX(-50%);">7/2 08:00</div>
<div class="ax" style="left:1396.5px;top:348.0px;font-size:11px;color:#3b3f46;font-weight:normal;transform:translateX(-50%);">7/2 16:00</div>
<div class="ax" style="left:1520.5px;top:348.0px;font-size:11px;color:#3b3f46;font-weight:normal;transform:translateX(-50%);">7/3 00:00</div>
<div class="ax" style="left:1643.5px;top:348.0px;font-size:11px;color:#3b3f46;font-weight:normal;transform:translateX(-50%);">7/3 08:00</div>
<div class="ax" style="left:1767.5px;top:348.0px;font-size:11px;color:#3b3f46;font-weight:normal;transform:translateX(-50%);">7/3 16:00</div>
<div class="abs" style="left:41px;top:376px;width:12px;height:3px;background:#2a63b3;border-radius:1px"></div>
<div class="ax" style="left:57.0px;top:372.0px;font-size:11px;color:#3b3f46;font-weight:normal;letter-spacing:-0.25px">Average RTT</div>
<div class="ax" style="left:125.0px;top:372.0px;font-size:11px;color:#3b3f46;font-weight:normal;letter-spacing:0px">Min: 1.422 ms</div>
<div class="ax" style="left:200.5px;top:372.0px;font-size:11px;color:#3b3f46;font-weight:normal;letter-spacing:0px">Max: 2.868 ms</div>
<div class="ax" style="left:278.8px;top:372.0px;font-size:11px;color:#3b3f46;font-weight:normal;letter-spacing:0px">Avg: 2.321 ms</div>
<div class="ax" style="left:354.6px;top:372.0px;font-size:11px;color:#3b3f46;font-weight:normal;letter-spacing:-0.03px">Current: 2.390 ms</div>
<div class="abs" style="left:452px;top:376px;width:12px;height:3px;background:#e2534a;border-radius:1px"></div>
<div class="ax" style="left:467.7px;top:372.0px;font-size:11px;color:#3b3f46;font-weight:normal;letter-spacing:0px">Minimum RTT</div>
<div class="ax" style="left:542.8px;top:372.0px;font-size:11px;color:#3b3f46;font-weight:normal;letter-spacing:0px">Min: 1.238 ms</div>
<div class="ax" style="left:618.6px;top:372.0px;font-size:11px;color:#3b3f46;font-weight:normal;letter-spacing:0px">Max: 2.108 ms</div>
<div class="ax" style="left:696.9px;top:372.0px;font-size:11px;color:#3b3f46;font-weight:normal;letter-spacing:0px">Avg: 1.974 ms</div>
<div class="ax" style="left:772.4px;top:372.0px;font-size:11px;color:#3b3f46;font-weight:normal;letter-spacing:-0.03px">Current: 1.900 ms</div>
<svg class="abs" style="left:840px;top:412px" width="15" height="14" viewBox="0 0 15 14"><path d="M7.55 12.6L1.5 6.6A3 3 0 0 1 7.55 2.4A3 3 0 0 1 13.6 6.6Z" fill="none" stroke="#a3a6ab" stroke-width="0.9"/><path d="M7.55 10.7L3.5 6.4A2.2 2.2 0 0 1 7.55 4.2A2.2 2.2 0 0 1 11.6 6.4Z" fill="#4a4f58"/></svg>
<div class="ax" style="left:967.5px;top:410.5px;font-size:12px;color:#4a4d55;font-weight:bold;transform:translateX(-50%);">Barnet College Ping Avg. Packet Loss</div>
<div class="ax" style="left:58.2px;top:435.0px;font-size:11px;color:#3b3f46;font-weight:normal;transform:translateX(-100%);">125%</div>
<div class="ax" style="left:58.2px;top:470.8px;font-size:11px;color:#3b3f46;font-weight:normal;transform:translateX(-100%);">100%</div>
<div class="ax" style="left:58.2px;top:506.6px;font-size:11px;color:#3b3f46;font-weight:normal;transform:translateX(-100%);">75%</div>
<div class="ax" style="left:58.2px;top:542.4px;font-size:11px;color:#3b3f46;font-weight:normal;transform:translateX(-100%);">50%</div>
<div class="ax" style="left:58.2px;top:578.2px;font-size:11px;color:#3b3f46;font-weight:normal;transform:translateX(-100%);">25%</div>
<div class="ax" style="left:58.2px;top:614.0px;font-size:11px;color:#3b3f46;font-weight:normal;transform:translateX(-100%);">0%</div>
<div class="ax" style="left:155.5px;top:628.0px;font-size:11px;color:#3b3f46;font-weight:normal;transform:translateX(-50%);">6/29 08:00</div>
<div class="ax" style="left:279.5px;top:628.0px;font-size:11px;color:#3b3f46;font-weight:normal;transform:translateX(-50%);">6/29 16:00</div>
<div class="ax" style="left:403.5px;top:628.0px;font-size:11px;color:#3b3f46;font-weight:normal;transform:translateX(-50%);">6/30 00:00</div>
<div class="ax" style="left:527.5px;top:628.0px;font-size:11px;color:#3b3f46;font-weight:normal;transform:translateX(-50%);">6/30 08:00</div>
<div class="ax" style="left:651.5px;top:628.0px;font-size:11px;color:#3b3f46;font-weight:normal;transform:translateX(-50%);">6/30 16:00</div>
<div class="ax" style="left:775.5px;top:628.0px;font-size:11px;color:#3b3f46;font-weight:normal;transform:translateX(-50%);">7/1 00:00</div>
<div class="ax" style="left:899.5px;top:628.0px;font-size:11px;color:#3b3f46;font-weight:normal;transform:translateX(-50%);">7/1 08:00</div>
<div class="ax" style="left:1023.5px;top:628.0px;font-size:11px;color:#3b3f46;font-weight:normal;transform:translateX(-50%);">7/1 16:00</div>
<div class="ax" style="left:1147.5px;top:628.0px;font-size:11px;color:#3b3f46;font-weight:normal;transform:translateX(-50%);">7/2 00:00</div>
<div class="ax" style="left:1271.5px;top:628.0px;font-size:11px;color:#3b3f46;font-weight:normal;transform:translateX(-50%);">7/2 08:00</div>
<div class="ax" style="left:1395.5px;top:628.0px;font-size:11px;color:#3b3f46;font-weight:normal;transform:translateX(-50%);">7/2 16:00</div>
<div class="ax" style="left:1519.5px;top:628.0px;font-size:11px;color:#3b3f46;font-weight:normal;transform:translateX(-50%);">7/3 00:00</div>
<div class="ax" style="left:1642.5px;top:628.0px;font-size:11px;color:#3b3f46;font-weight:normal;transform:translateX(-50%);">7/3 08:00</div>
<div class="ax" style="left:1766.5px;top:628.0px;font-size:11px;color:#3b3f46;font-weight:normal;transform:translateX(-50%);">7/3 16:00</div>
<div class="abs" style="left:41px;top:656px;width:12px;height:3px;background:#2a63b3;border-radius:1px"></div>
<div class="ax" style="left:57.1px;top:652.0px;font-size:11px;color:#3b3f46;font-weight:normal;letter-spacing:-0.06px">Average Packet Loss</div>
<div class="ax" style="left:165.4px;top:652.0px;font-size:11px;color:#3b3f46;font-weight:normal;letter-spacing:-0.2px">Min: 0%</div>
<div class="ax" style="left:209.5px;top:652.0px;font-size:11px;color:#3b3f46;font-weight:normal;letter-spacing:-0.2px">Max: 100%</div>
<div class="ax" style="left:268.6px;top:652.0px;font-size:11px;color:#3b3f46;font-weight:normal;letter-spacing:-0.3px">Avg: 0%</div>
<div class="ax" style="left:313.0px;top:652.0px;font-size:11px;color:#3b3f46;font-weight:normal;letter-spacing:-0.3px">Current: 0%</div>
  </div>
</div>
<div id="winborder"></div>
</body></html>
